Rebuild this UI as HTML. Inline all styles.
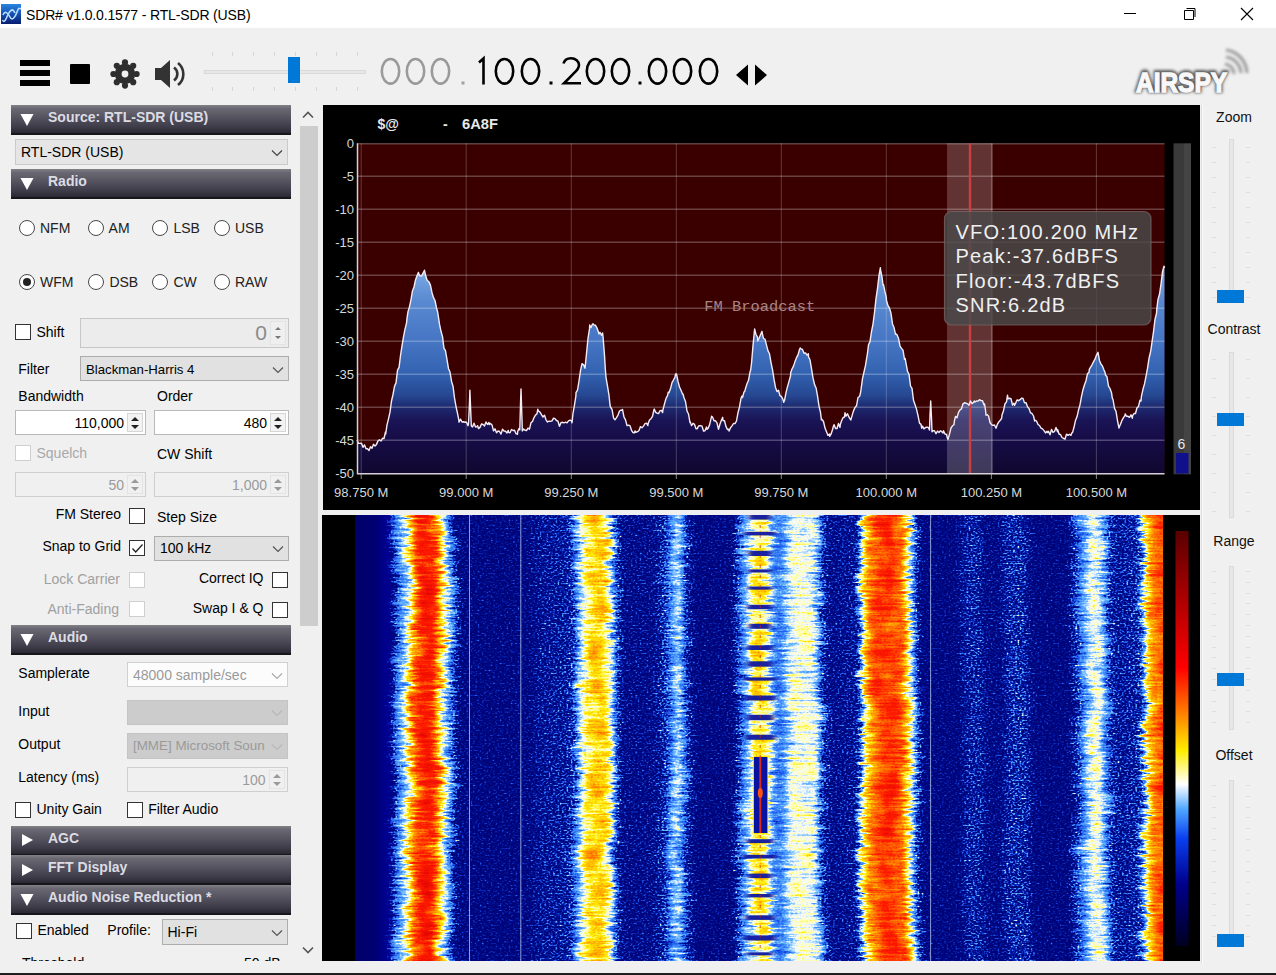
<!DOCTYPE html>
<html><head><meta charset="utf-8">
<style>
*{box-sizing:border-box;margin:0;padding:0}
html,body{width:1276px;height:975px;overflow:hidden;background:#f0f0f0;font-family:"Liberation Sans",sans-serif;color:#000}
.a{position:absolute}
#title{left:0;top:0;width:1276px;height:28px;background:#fff}
.t14{font-size:14px;line-height:16px;white-space:nowrap}
.hdr{position:absolute;left:11px;width:280px;height:30px;background:linear-gradient(#828286 0%,#6a6872 12%,#55535f 45%,#3e3c48 78%,#2a2832 100%);border-bottom:2px solid #17161c}
.hdr .tx{position:absolute;left:37px;top:4px;font-size:14px;line-height:17px;font-weight:bold;color:#dcdce4;white-space:nowrap}
.hdr .tri{position:absolute;left:9px;top:7.5px}
.cb{position:absolute;width:16px;height:16px;border:1px solid #333;background:#fff}
.cb.dis{border-color:#cfcfcf}
.rd{position:absolute;width:16px;height:16px;border:1.5px solid #484848;border-radius:50%;background:#fff}
.combo{position:absolute;background:#e1e1e1;border:1px solid #adadad}
.num{position:absolute;background:#fff;border:1px solid #b4b4b4}
.num.dis{background:#f0f0f0;border-color:#ccc}
.gray{color:#a0a0a0}
</style></head><body>
<div id="title" class="a">
<svg class="a" style="left:1px;top:4px" width="20" height="20" viewBox="0 0 20 20"><defs><linearGradient id="ig" x1="0" y1="0" x2="0" y2="1"><stop offset="0" stop-color="#2a86e0"/><stop offset="0.5" stop-color="#1450b0"/><stop offset="1" stop-color="#081c70"/></linearGradient></defs><rect width="20" height="20" fill="url(#ig)"/><g fill="none" stroke="#b8dcff" stroke-width="1.6"><path d="M1.5 16C4 21 6 11 8.5 8S12 5 14 9"/><path d="M2 11C4 6 7 9 9 13S14 14 16 8 19 5 20 5"/></g></svg>
<div class="a" style="left:26px;top:7px;font-size:14px;line-height:17px;letter-spacing:-0.15px;color:#000;white-space:nowrap">SDR# v1.0.0.1577 - RTL-SDR (USB)</div>
<svg class="a" style="left:1118px;top:0" width="158" height="28" viewBox="0 0 158 28"><path d="M6 13.5h12" stroke="#000" stroke-width="1"/><path d="M66.5 10.5h9v9h-9z M68.5 8.5h8.5v8.5" stroke="#000" stroke-width="1" fill="none"/><path d="M123 8l12 12M135 8l-12 12" stroke="#000" stroke-width="1.1"/></svg>
</div>
<div id="toolbar">
<div class="a" style="left:20px;top:60px;width:30px;height:6px;background:#000"></div>
<div class="a" style="left:20px;top:70px;width:30px;height:6px;background:#000"></div>
<div class="a" style="left:20px;top:80px;width:30px;height:6px;background:#000"></div>
<div class="a" style="left:70px;top:64px;width:20px;height:20px;background:#000;border-radius:1px"></div>
<svg class="a" style="left:108px;top:57px" width="34" height="34" viewBox="-17 -17 34 34"><g fill="#2e2e2e"><circle r="10.2"/><circle cx="0.00" cy="-11.60" r="3.1"/><circle cx="8.20" cy="-8.20" r="3.1"/><circle cx="11.60" cy="-0.00" r="3.1"/><circle cx="8.20" cy="8.20" r="3.1"/><circle cx="0.00" cy="11.60" r="3.1"/><circle cx="-8.20" cy="8.20" r="3.1"/><circle cx="-11.60" cy="0.00" r="3.1"/><circle cx="-8.20" cy="-8.20" r="3.1"/></g><circle r="3.4" fill="#f0f0f0"/></svg>
<svg class="a" style="left:153px;top:58px" width="34" height="32" viewBox="0 0 34 32"><path d="M2 10h6l9-8v28l-9-8H2z" fill="#333"/><path d="M21 9.5a8 8 0 0 1 0 13" stroke="#333" stroke-width="2.6" fill="none"/><path d="M25 5a14 14 0 0 1 0 22" stroke="#333" stroke-width="2.6" fill="none"/></svg>
<div class="a" style="left:204px;top:70px;width:162px;height:4px;background:#e7e7e7;border:1px solid #d9d9d9"></div>
<div class="a" style="left:212px;top:52px;width:1px;height:4px;background:#d6d6d6"></div><div class="a" style="left:212px;top:87px;width:1px;height:4px;background:#d6d6d6"></div><div class="a" style="left:232px;top:52px;width:1px;height:4px;background:#d6d6d6"></div><div class="a" style="left:232px;top:87px;width:1px;height:4px;background:#d6d6d6"></div><div class="a" style="left:253px;top:52px;width:1px;height:4px;background:#d6d6d6"></div><div class="a" style="left:253px;top:87px;width:1px;height:4px;background:#d6d6d6"></div><div class="a" style="left:274px;top:52px;width:1px;height:4px;background:#d6d6d6"></div><div class="a" style="left:274px;top:87px;width:1px;height:4px;background:#d6d6d6"></div><div class="a" style="left:295px;top:52px;width:1px;height:4px;background:#d6d6d6"></div><div class="a" style="left:295px;top:87px;width:1px;height:4px;background:#d6d6d6"></div><div class="a" style="left:316px;top:52px;width:1px;height:4px;background:#d6d6d6"></div><div class="a" style="left:316px;top:87px;width:1px;height:4px;background:#d6d6d6"></div><div class="a" style="left:336px;top:52px;width:1px;height:4px;background:#d6d6d6"></div><div class="a" style="left:336px;top:87px;width:1px;height:4px;background:#d6d6d6"></div><div class="a" style="left:357px;top:52px;width:1px;height:4px;background:#d6d6d6"></div><div class="a" style="left:357px;top:87px;width:1px;height:4px;background:#d6d6d6"></div>
<div class="a" style="left:288px;top:57px;width:12px;height:26px;background:#0078d7"></div>
<svg class="a" style="left:375px;top:50px" width="400" height="42" viewBox="375 50 400 42">
<g fill="none" stroke-width="2.6">
<g stroke="#9a9a9a"><ellipse cx="390.5" cy="71.3" rx="8.7" ry="12.3"/><ellipse cx="415.5" cy="71.3" rx="8.7" ry="12.3"/><ellipse cx="440.5" cy="71.3" rx="8.7" ry="12.3"/></g>
<g stroke="#000"><path d="M479 62.5l4.5-4v26"/><ellipse cx="504.5" cy="71.3" rx="8.7" ry="12.3"/><ellipse cx="530.5" cy="71.3" rx="8.7" ry="12.3"/>
<path d="M563.5 63.5c1-3.5 4-5.2 7.5-5.2c4.5 0 8 2.8 8 6.8c0 3.5-2 5.5-5.5 8.5l-9.5 9.7h17"/>
<ellipse cx="595.5" cy="71.3" rx="8.7" ry="12.3"/><ellipse cx="620.5" cy="71.3" rx="8.7" ry="12.3"/>
<ellipse cx="657.5" cy="71.3" rx="8.7" ry="12.3"/><ellipse cx="682.5" cy="71.3" rx="8.7" ry="12.3"/><ellipse cx="708.5" cy="71.3" rx="8.7" ry="12.3"/></g>
</g>
<rect x="461.5" y="81.5" width="3" height="3" fill="#a0a0a0"/><rect x="549.5" y="81.5" width="3" height="3" fill="#000"/><rect x="638.5" y="81.5" width="3" height="3" fill="#000"/>
<path d="M736 75l12-10.5v21z M767 75l-12-10.5v21z" fill="#000"/>
</svg>
<svg class="a" style="left:1125px;top:40px" width="140" height="62" viewBox="1125 40 140 62">
<defs><filter id="sh" x="1120" y="35" width="150" height="70" filterUnits="userSpaceOnUse"><feGaussianBlur stdDeviation="1.6"/></filter><filter id="sh2" x="1120" y="35" width="150" height="70" filterUnits="userSpaceOnUse"><feGaussianBlur stdDeviation="1.1"/></filter></defs>
<text x="1136" y="91" font-family="Liberation Sans" font-weight="bold" font-size="27" textLength="91" lengthAdjust="spacingAndGlyphs" fill="#555" stroke="#5a5a5a" stroke-width="4" filter="url(#sh)">AIRSPY</text>
<g fill="none" stroke="#9a9a9a" stroke-width="3" filter="url(#sh)"><path d="M1225 64a10 10 0 0 1 9 10"/><path d="M1226 57a17 17 0 0 1 15 16"/><path d="M1226 50a24 24 0 0 1 21 23"/></g>
<text x="1136" y="91.5" font-family="Liberation Sans" font-weight="bold" font-size="27" textLength="91" lengthAdjust="spacingAndGlyphs" fill="#f8f8f8" stroke="#f8f8f8" stroke-width="1.3">AIRSPY</text>
</svg>
</div>
<div id="left" class="a" style="left:0;top:100px;width:300px;height:861px;overflow:hidden"><div class="a" style="left:0;top:-100px;width:300px;height:1000px"><div class="hdr" style="top:105px"><svg class="tri" width="14" height="14" viewBox="0 0 14 14"><path d="M0.5 1h13L7 13z" fill="#fff"/></svg><div class="tx">Source: RTL-SDR (USB)</div></div>
<div class="a" style="left:15px;top:139px;width:273px;height:26px;background:#e5e5e5;border:1px solid #cacaca"><div class="a t14" style="left:5px;top:4.0px;color:#000">RTL-SDR (USB)</div><svg class="a" style="left:255px;top:9.0px" width="12" height="8" viewBox="0 0 12 8"><path d="M1 1.5l5 5 5-5" stroke="#444" stroke-width="1.2" fill="none"/></svg></div>
<div class="hdr" style="top:169px"><svg class="tri" width="14" height="14" viewBox="0 0 14 14"><path d="M0.5 1h13L7 13z" fill="#fff"/></svg><div class="tx">Radio</div></div>
<div class="rd" style="left:19.2px;top:220.3px"></div>
<div class="a t14 " style="left:40px;top:220.2px;color:#222">NFM</div>
<div class="rd" style="left:87.5px;top:220.3px"></div>
<div class="a t14 " style="left:108.6px;top:220.2px;color:#222">AM</div>
<div class="rd" style="left:151.7px;top:220.3px"></div>
<div class="a t14 " style="left:173.4px;top:220.2px;color:#222">LSB</div>
<div class="rd" style="left:213.8px;top:220.3px"></div>
<div class="a t14 " style="left:235px;top:220.2px;color:#222">USB</div>
<div class="rd" style="left:19.2px;top:274.4px"><div class="a" style="left:2.5px;top:2.5px;width:8px;height:8px;border-radius:50%;background:#222"></div></div>
<div class="a t14 " style="left:40px;top:274.3px;color:#222">WFM</div>
<div class="rd" style="left:87.5px;top:274.4px"></div>
<div class="a t14 " style="left:109.4px;top:274.3px;color:#222">DSB</div>
<div class="rd" style="left:151.7px;top:274.4px"></div>
<div class="a t14 " style="left:173.4px;top:274.3px;color:#222">CW</div>
<div class="rd" style="left:213.8px;top:274.4px"></div>
<div class="a t14 " style="left:235px;top:274.3px;color:#222">RAW</div>
<div class="cb" style="left:15px;top:324px"></div>
<div class="a t14 " style="left:36.5px;top:324px;">Shift</div>
<div class="a" style="left:80px;top:318px;width:209px;height:30px;background:#ececec;border:1px solid #c6c6c6"><div class="a" style="right:21px;top:3px;font-size:21px;line-height:22px;color:#8a8a8a">0</div><div class="a" style="right:2px;top:2px;width:16px;height:24px;background:#efefef;border:1px solid #e3e3e3"></div><svg class="a" style="right:4px;top:6px" width="12" height="16" viewBox="0 0 12 16"><path d="M3 5l3-3 3 3z M3 11l3 3 3-3z" fill="#777"/></svg></div>
<div class="a t14 " style="left:18.3px;top:360.8px;">Filter</div>
<div class="a" style="left:80px;top:356px;width:209px;height:25px;background:#e1e1e1;border:1px solid #adadad"><div class="a t14" style="left:5px;top:3.5px;color:#000"><span style="font-size:13.2px">Blackman-Harris 4</span></div><svg class="a" style="left:191px;top:8.5px" width="12" height="8" viewBox="0 0 12 8"><path d="M1 1.5l5 5 5-5" stroke="#555" stroke-width="1.2" fill="none"/></svg></div>
<div class="a t14 " style="left:18.3px;top:388px;">Bandwidth</div>
<div class="a t14 " style="left:157px;top:388px;">Order</div>
<div class="a" style="left:15px;top:410px;width:131px;height:25px;background:#fff;border:1px solid #b9b9b9"><div class="a t14" style="right:21px;top:3.5px;color:#000;text-align:right">110,000</div><div class="a" style="right:2px;top:2px;width:16px;height:19px;background:#f3f3f3;border:1px solid #d6d6d6"></div><svg class="a" style="right:4px;top:3.5px" width="12" height="16" viewBox="0 0 12 16"><path d="M2 6l4-4 4 4z M2 10l4 4 4-4z" fill="#222"/></svg></div>
<div class="a" style="left:154px;top:410px;width:135px;height:25px;background:#fff;border:1px solid #b9b9b9"><div class="a t14" style="right:21px;top:3.5px;color:#000;text-align:right">480</div><div class="a" style="right:2px;top:2px;width:16px;height:19px;background:#f3f3f3;border:1px solid #d6d6d6"></div><svg class="a" style="right:4px;top:3.5px" width="12" height="16" viewBox="0 0 12 16"><path d="M2 6l4-4 4 4z M2 10l4 4 4-4z" fill="#222"/></svg></div>
<div class="cb dis" style="left:15px;top:445px"></div>
<div class="a t14 " style="left:36.5px;top:445px;color:#a8a8a8">Squelch</div>
<div class="a t14 " style="left:157px;top:445.5px;">CW Shift</div>
<div class="a" style="left:15px;top:472px;width:131px;height:25px;background:#f0f0f0;border:1px solid #cfcfcf"><div class="a t14" style="right:21px;top:3.5px;color:#9a9a9a;text-align:right">50</div><div class="a" style="right:2px;top:2px;width:16px;height:19px;background:#f0f0f0;border:1px solid #e3e3e3"></div><svg class="a" style="right:4px;top:3.5px" width="12" height="16" viewBox="0 0 12 16"><path d="M2 6l4-4 4 4z M2 10l4 4 4-4z" fill="#9a9a9a"/></svg></div>
<div class="a" style="left:154px;top:472px;width:135px;height:25px;background:#f0f0f0;border:1px solid #cfcfcf"><div class="a t14" style="right:21px;top:3.5px;color:#9a9a9a;text-align:right">1,000</div><div class="a" style="right:2px;top:2px;width:16px;height:19px;background:#f0f0f0;border:1px solid #e3e3e3"></div><svg class="a" style="right:4px;top:3.5px" width="12" height="16" viewBox="0 0 12 16"><path d="M2 6l4-4 4 4z M2 10l4 4 4-4z" fill="#9a9a9a"/></svg></div>
<div class="a t14 " style="right:179.0px;top:506px;text-align:right">FM Stereo</div>
<div class="cb" style="left:129px;top:508px"></div>
<div class="a t14 " style="left:157px;top:508.6px;">Step Size</div>
<div class="a t14 " style="right:179.0px;top:537.6px;text-align:right">Snap to Grid</div>
<div class="cb" style="left:129px;top:539.5px"><svg class="a" style="left:1px;top:1px" width="13" height="13" viewBox="0 0 13 13"><path d="M1.5 6.5l3.2 3.5L11.5 2.5" stroke="#222" stroke-width="1.3" fill="none"/></svg></div>
<div class="a" style="left:154px;top:535.5px;width:135px;height:25.0px;background:#e1e1e1;border:1px solid #adadad"><div class="a t14" style="left:5px;top:3.5px;color:#000">100 kHz</div><svg class="a" style="left:117px;top:8.5px" width="12" height="8" viewBox="0 0 12 8"><path d="M1 1.5l5 5 5-5" stroke="#555" stroke-width="1.2" fill="none"/></svg></div>
<div class="a t14 gray" style="right:180.0px;top:570.5px;text-align:right">Lock Carrier</div>
<div class="cb dis" style="left:129px;top:571.5px"></div>
<div class="a t14 " style="right:36.5px;top:569.8px;text-align:right">Correct IQ</div>
<div class="cb" style="left:272px;top:571.5px"></div>
<div class="a t14 gray" style="right:181.0px;top:601px;text-align:right">Anti-Fading</div>
<div class="cb dis" style="left:129px;top:601px"></div>
<div class="a t14 " style="right:36.5px;top:600px;text-align:right">Swap I &amp; Q</div>
<div class="cb" style="left:272px;top:602px"></div>
<div class="hdr" style="top:625px"><svg class="tri" width="14" height="14" viewBox="0 0 14 14"><path d="M0.5 1h13L7 13z" fill="#fff"/></svg><div class="tx">Audio</div></div>
<div class="a t14 " style="left:18.3px;top:665px;">Samplerate</div>
<div class="a" style="left:127px;top:662px;width:160.5px;height:25px;background:#fcfcfc;border:1px solid #d0d0d0"><div class="a t14" style="left:5px;top:3.5px;color:#9a9a9a">48000 sample/sec</div><svg class="a" style="left:142.5px;top:8.5px" width="12" height="8" viewBox="0 0 12 8"><path d="M1 1.5l5 5 5-5" stroke="#aaa" stroke-width="1.2" fill="none"/></svg></div>
<div class="a t14 " style="left:18.3px;top:702.6px;">Input</div>
<div class="a" style="left:127px;top:699.5px;width:160.5px;height:25.5px;background:#cccccc;border:1px solid #c4c4c4"><div class="a t14" style="left:5px;top:3.75px;color:#000"></div><svg class="a" style="left:142.5px;top:8.75px" width="12" height="8" viewBox="0 0 12 8"><path d="M1 1.5l5 5 5-5" stroke="#b8b8b8" stroke-width="1.2" fill="none"/></svg></div>
<div class="a t14 " style="left:18.3px;top:735.5px;">Output</div>
<div class="a" style="left:127px;top:733px;width:160.5px;height:26px;background:#cccccc;border:1px solid #c4c4c4"><div class="a t14" style="width:132px;overflow:hidden;font-size:13.4px;left:5px;top:4.0px;color:#9a9a9a">[MME] Microsoft Soun</div><svg class="a" style="left:142.5px;top:9.0px" width="12" height="8" viewBox="0 0 12 8"><path d="M1 1.5l5 5 5-5" stroke="#b8b8b8" stroke-width="1.2" fill="none"/></svg></div>
<div class="a t14 " style="left:18.3px;top:769.3px;">Latency (ms)</div>
<div class="a" style="left:127px;top:767px;width:160.5px;height:25px;background:#f0f0f0;border:1px solid #cfcfcf"><div class="a t14" style="right:21px;top:3.5px;color:#9a9a9a;text-align:right">100</div><div class="a" style="right:2px;top:2px;width:16px;height:19px;background:#f0f0f0;border:1px solid #e3e3e3"></div><svg class="a" style="right:4px;top:3.5px" width="12" height="16" viewBox="0 0 12 16"><path d="M2 6l4-4 4 4z M2 10l4 4 4-4z" fill="#9a9a9a"/></svg></div>
<div class="cb" style="left:15px;top:801.5px"></div>
<div class="a t14 " style="left:36.5px;top:801px;">Unity Gain</div>
<div class="cb" style="left:127px;top:801.5px"></div>
<div class="a t14 " style="left:148.2px;top:801px;">Filter Audio</div>
<div class="hdr" style="top:825.5px"><svg class="tri" width="14" height="14" viewBox="0 0 14 14"><path d="M2 1l11 6L2 13z" fill="#fff"/></svg><div class="tx">AGC</div></div>
<div class="hdr" style="top:855px"><svg class="tri" width="14" height="14" viewBox="0 0 14 14"><path d="M2 1l11 6L2 13z" fill="#fff"/></svg><div class="tx">FFT Display</div></div>
<div class="hdr" style="top:885px"><svg class="tri" width="14" height="14" viewBox="0 0 14 14"><path d="M0.5 1h13L7 13z" fill="#fff"/></svg><div class="tx">Audio Noise Reduction *</div></div>
<div class="cb" style="left:15.5px;top:922.5px"></div>
<div class="a t14 " style="left:37.5px;top:922.4px;">Enabled</div>
<div class="a t14 " style="left:107.3px;top:922px;">Profile:</div>
<div class="a" style="left:161.5px;top:919px;width:126.5px;height:26px;background:#e1e1e1;border:1px solid #adadad"><div class="a t14" style="left:5px;top:4.0px;color:#000">Hi-Fi</div><svg class="a" style="left:108.5px;top:9.0px" width="12" height="8" viewBox="0 0 12 8"><path d="M1 1.5l5 5 5-5" stroke="#555" stroke-width="1.2" fill="none"/></svg></div>
<div class="a t14 " style="left:22px;top:955px;">Threshold</div><div class="a t14 " style="right:19.4px;top:955px;text-align:right">50 dB</div></div></div><div class="a" style="left:299px;top:106px;width:19px;height:855px;background:#f0f0f0"></div>
<svg class="a" style="left:302px;top:111px" width="12" height="8" viewBox="0 0 12 8"><path d="M1 6.5l5-5 5 5" stroke="#555" stroke-width="1.6" fill="none"/></svg>
<div class="a" style="left:300px;top:126px;width:18px;height:500px;background:#cdcdcd"></div>
<svg class="a" style="left:302px;top:946px" width="12" height="8" viewBox="0 0 12 8"><path d="M1 1.5l5 5 5-5" stroke="#555" stroke-width="1.6" fill="none"/></svg>
<svg class="a" style="left:323px;top:105px" width="877" height="405" viewBox="323 105 877 405">
<defs><linearGradient id="sg" gradientUnits="userSpaceOnUse" x1="0" y1="265" x2="0" y2="473"><stop offset="0" stop-color="#80b0e8"/><stop offset="0.168" stop-color="#5a8ad0"/><stop offset="0.36" stop-color="#4676c4"/><stop offset="0.52" stop-color="#3262b0"/><stop offset="0.625" stop-color="#264892"/><stop offset="0.683" stop-color="#1e2a70"/><stop offset="0.745" stop-color="#1a1456"/><stop offset="0.84" stop-color="#160c46"/><stop offset="1" stop-color="#100830"/></linearGradient></defs>
<rect x="323" y="105" width="877" height="405" fill="#000"/>
<rect x="357" y="143.3" width="807.5" height="330" fill="#3a0000"/>
<path d="M357.0 440.0 L358.5 443.4 L360.0 443.4 L361.5 443.3 L363.0 447.3 L364.5 444.9 L366.0 448.7 L367.5 448.7 L369.0 450.5 L370.5 446.7 L372.0 448.3 L373.5 444.3 L375.0 446.0 L376.5 444.4 L378.0 440.9 L379.5 439.8 L381.0 441.0 L382.5 438.3 L384.0 438.5 L385.5 432.0 L385.7 434.0 L387.0 424.9 L388.5 418.8 L390.0 412.2 L391.5 401.0 L393.0 394.5 L394.5 386.4 L396.0 382.9 L397.5 370.4 L398.6 368.0 L399.0 367.8 L400.5 355.5 L402.0 345.8 L403.5 336.8 L405.0 329.1 L406.5 323.2 L407.0 318.4 L408.0 311.6 L409.5 306.6 L411.0 299.6 L412.5 290.7 L412.8 290.0 L414.0 287.0 L415.5 279.9 L417.0 275.7 L418.5 272.4 L418.7 273.6 L420.0 275.8 L421.5 276.0 L423.0 273.2 L424.5 270.2 L424.6 271.2 L426.0 276.8 L427.0 280.0 L427.5 280.5 L429.0 281.9 L430.5 285.4 L432.0 292.7 L433.5 297.7 L435.0 300.5 L436.5 308.0 L437.5 311.3 L438.0 314.1 L439.5 324.2 L441.0 331.3 L442.5 336.6 L444.0 348.7 L444.6 349.0 L445.5 350.9 L447.0 359.7 L448.5 368.7 L450.0 372.0 L451.5 381.0 L451.7 382.0 L453.0 386.2 L454.5 397.9 L456.0 406.5 L457.5 413.3 L458.8 419.8 L459.0 422.1 L460.5 419.2 L462.0 422.0 L463.5 421.8 L465.0 422.2 L465.8 422.0 L466.5 422.3 L468.0 425.7 L468.5 424.0 L469.5 402.6 L469.9 390.3 L471.0 418.2 L471.3 426.0 L472.5 426.9 L474.0 423.2 L475.5 427.0 L477.0 426.6 L477.6 425.7 L478.5 428.6 L480.0 427.4 L481.5 424.0 L483.0 424.5 L484.5 426.0 L486.0 422.0 L487.5 424.5 L489.0 422.5 L489.4 424.5 L490.5 423.5 L492.0 424.9 L493.5 430.9 L495.0 428.8 L496.5 432.8 L498.0 431.0 L499.5 431.5 L501.0 434.1 L502.5 429.1 L504.0 431.0 L505.5 431.3 L507.0 433.0 L508.3 430.4 L508.5 432.3 L510.0 432.8 L511.5 429.5 L513.0 430.5 L514.5 430.3 L516.0 433.7 L517.5 434.3 L517.7 431.6 L519.0 428.5 L519.8 430.0 L520.5 404.1 L521.0 389.0 L522.0 419.7 L522.3 431.0 L523.5 429.1 L525.0 430.2 L526.5 430.5 L528.0 428.2 L529.5 429.2 L531.0 422.6 L532.5 421.5 L534.0 417.6 L535.5 415.1 L537.0 413.8 L537.8 409.2 L538.5 411.2 L540.0 412.1 L541.5 414.7 L543.0 417.0 L544.5 415.2 L546.0 419.8 L547.5 422.0 L549.0 421.1 L550.5 421.4 L552.0 420.8 L553.5 418.2 L555.0 418.6 L556.5 420.5 L558.0 421.2 L559.2 425.6 L559.5 426.3 L561.0 422.6 L562.5 422.3 L564.0 422.8 L565.5 422.2 L567.0 422.9 L568.5 420.9 L570.0 420.2 L571.5 420.8 L572.0 422.8 L573.0 413.5 L574.5 404.8 L575.9 396.0 L576.0 392.6 L577.5 390.2 L579.0 381.0 L580.5 370.7 L582.0 363.7 L582.3 363.7 L583.5 364.8 L585.0 368.3 L586.5 353.7 L588.0 338.4 L589.5 328.9 L589.7 325.0 L591.0 327.6 L592.5 324.0 L593.4 324.0 L594.0 325.0 L595.5 325.3 L597.0 328.0 L598.5 332.2 L599.0 334.0 L600.0 332.3 L601.5 335.3 L602.6 333.0 L603.0 336.3 L604.5 355.2 L605.4 370.0 L606.0 377.3 L607.5 386.1 L609.0 395.3 L610.0 405.0 L610.5 407.0 L612.0 409.3 L613.5 417.7 L613.7 418.2 L615.0 419.8 L616.5 417.6 L618.0 415.1 L619.5 411.0 L621.0 410.2 L622.0 410.0 L622.5 409.4 L624.0 417.2 L625.5 419.9 L627.0 425.6 L627.6 425.6 L628.5 425.2 L630.0 425.7 L631.5 430.3 L633.0 432.5 L634.5 432.8 L635.0 431.0 L636.0 432.3 L637.5 431.7 L639.0 430.5 L640.5 426.6 L642.0 427.7 L642.3 427.4 L643.5 426.1 L645.0 423.7 L646.5 423.2 L647.9 425.6 L648.0 424.0 L649.5 420.0 L651.0 418.7 L652.5 416.4 L654.0 409.5 L654.3 409.0 L655.5 412.1 L657.0 413.1 L658.5 413.6 L660.0 410.7 L661.5 410.4 L662.6 412.6 L663.0 409.5 L664.5 403.9 L666.0 398.5 L667.5 395.6 L668.2 392.3 L669.0 392.7 L670.5 388.6 L672.0 382.7 L673.5 380.0 L675.0 377.2 L675.6 373.9 L676.5 373.9 L678.0 381.4 L679.5 387.0 L681.0 390.3 L682.5 394.1 L683.0 394.0 L684.0 397.7 L685.5 401.6 L687.0 411.0 L688.5 414.0 L690.0 422.6 L690.3 421.9 L691.5 425.6 L693.0 423.3 L694.5 424.4 L696.0 428.8 L697.5 428.6 L697.7 427.4 L699.0 425.7 L700.5 425.7 L702.0 426.2 L703.5 431.0 L705.0 430.7 L706.5 427.1 L707.0 429.3 L708.0 428.4 L709.5 425.1 L711.0 418.9 L711.6 416.3 L712.5 417.0 L714.0 420.8 L715.5 420.8 L717.0 422.8 L718.0 427.4 L718.5 429.2 L720.0 424.0 L721.5 420.0 L722.7 417.3 L723.0 420.5 L724.5 420.8 L726.0 426.6 L727.5 429.6 L729.0 429.2 L729.1 431.1 L730.5 427.7 L732.0 425.9 L733.5 423.5 L735.0 423.6 L736.5 421.0 L738.0 412.7 L739.5 406.9 L741.0 398.3 L742.0 396.0 L742.5 397.6 L744.0 391.9 L744.7 391.6 L745.5 388.5 L747.0 383.8 L748.5 380.3 L750.0 372.0 L750.6 370.3 L751.5 363.5 L753.0 345.5 L754.5 330.2 L754.6 329.0 L756.0 334.5 L757.5 337.2 L757.7 340.8 L759.0 338.5 L760.5 334.7 L762.0 331.4 L762.4 333.8 L763.5 338.7 L765.0 339.2 L766.5 345.2 L768.0 350.9 L769.5 353.8 L771.0 362.6 L772.5 369.6 L774.0 379.2 L775.4 386.9 L775.5 387.4 L777.0 391.6 L778.5 390.3 L780.0 395.7 L781.5 396.6 L783.0 399.6 L783.7 402.2 L784.5 400.5 L786.0 392.6 L787.5 386.6 L789.0 381.4 L790.5 376.0 L790.7 372.7 L792.0 369.0 L793.5 366.1 L795.0 361.6 L796.5 357.7 L798.0 354.9 L799.5 349.5 L800.2 348.0 L801.0 348.8 L802.5 349.5 L804.0 353.3 L805.5 352.9 L807.0 355.1 L808.4 353.8 L808.5 356.9 L810.0 359.8 L811.5 368.6 L813.0 377.9 L814.5 384.3 L815.5 386.9 L816.0 387.5 L817.5 395.8 L819.0 406.1 L820.5 412.3 L821.4 419.9 L822.0 419.5 L823.5 421.5 L825.0 428.1 L826.5 431.7 L828.0 435.4 L829.5 433.9 L829.7 436.4 L831.0 434.2 L832.5 429.8 L833.2 427.0 L834.0 424.6 L835.5 428.5 L837.0 428.5 L838.5 423.5 L840.0 427.4 L840.3 424.6 L841.5 421.0 L843.0 417.7 L844.5 417.0 L845.0 412.8 L846.0 416.0 L847.5 413.8 L849.0 417.2 L850.5 419.5 L850.9 419.9 L852.0 415.9 L853.5 410.9 L855.0 407.5 L856.5 405.8 L858.0 397.5 L859.5 396.5 L860.3 394.0 L861.0 389.7 L862.5 378.7 L864.0 372.0 L865.5 365.3 L867.0 356.1 L867.4 353.8 L868.5 344.8 L870.0 341.6 L871.5 331.7 L873.0 324.1 L874.5 312.5 L876.0 298.7 L877.5 288.3 L879.0 275.6 L880.4 267.7 L880.5 270.0 L882.0 277.0 L883.0 285.0 L883.5 284.6 L885.0 291.9 L886.3 297.2 L886.5 300.4 L888.0 305.7 L889.5 308.2 L891.0 313.4 L892.5 323.9 L894.0 327.6 L895.5 334.2 L895.7 333.8 L897.0 334.7 L898.5 338.4 L900.0 346.1 L901.5 348.4 L903.0 350.2 L904.5 359.3 L905.2 358.5 L906.0 363.1 L907.5 371.3 L909.0 374.2 L910.5 386.0 L912.0 388.4 L913.5 400.3 L914.6 403.4 L915.0 404.5 L916.5 409.1 L918.0 415.6 L919.5 423.1 L921.0 424.4 L921.7 428.2 L922.5 426.2 L924.0 428.9 L925.5 427.5 L927.0 427.1 L928.5 427.7 L929.5 430.0 L930.0 415.2 L930.7 401.0 L931.5 418.1 L932.0 431.7 L933.0 430.7 L934.5 430.8 L936.0 433.7 L937.5 431.1 L939.0 432.5 L940.5 430.8 L942.0 432.0 L943.0 433.0 L943.5 430.7 L945.0 434.0 L946.5 434.5 L947.6 438.8 L948.0 439.2 L949.5 434.1 L951.0 428.0 L952.5 425.8 L954.0 424.7 L954.4 421.0 L955.5 416.4 L957.0 417.7 L958.5 412.4 L960.0 409.8 L961.5 408.8 L963.0 403.8 L964.5 402.8 L966.0 403.1 L967.5 403.8 L969.0 405.2 L970.5 401.0 L972.0 403.6 L973.5 402.5 L974.5 401.0 L975.0 402.0 L976.5 401.0 L978.0 401.1 L979.5 399.7 L981.0 400.6 L982.5 400.7 L984.0 405.1 L984.5 403.8 L985.5 410.0 L986.0 415.3 L987.0 414.6 L988.5 416.0 L990.0 422.5 L991.5 424.6 L993.0 425.4 L994.5 425.0 L996.0 428.2 L997.5 424.0 L999.0 421.7 L1000.5 420.1 L1001.7 418.2 L1002.0 415.0 L1003.5 410.7 L1005.0 403.7 L1006.5 401.9 L1007.5 395.2 L1008.0 398.7 L1009.5 398.3 L1011.0 398.6 L1012.5 405.1 L1014.0 403.3 L1014.6 405.3 L1015.5 403.5 L1017.0 399.9 L1018.5 400.7 L1020.0 399.7 L1021.5 398.4 L1021.8 398.1 L1023.0 398.4 L1024.5 402.9 L1026.0 402.6 L1027.5 406.8 L1029.0 408.4 L1030.5 412.9 L1032.0 413.5 L1033.5 416.0 L1034.7 421.0 L1035.0 420.1 L1036.5 421.0 L1038.0 424.5 L1039.5 425.5 L1041.0 428.1 L1042.5 428.9 L1044.0 430.6 L1045.5 432.9 L1047.0 431.3 L1047.7 432.6 L1048.5 431.3 L1050.0 434.8 L1051.5 429.4 L1053.0 432.4 L1054.5 431.5 L1056.0 427.5 L1057.5 431.8 L1057.7 429.7 L1059.0 434.0 L1060.5 434.6 L1062.0 437.5 L1063.5 438.3 L1065.0 439.2 L1066.5 434.1 L1068.0 435.4 L1069.5 434.3 L1071.0 435.3 L1072.0 432.6 L1072.5 432.6 L1074.0 427.3 L1075.5 420.4 L1077.0 416.8 L1078.5 410.1 L1080.0 404.7 L1080.7 401.0 L1081.5 396.4 L1083.0 389.7 L1084.5 384.8 L1086.0 380.7 L1087.5 373.6 L1089.0 372.5 L1089.3 369.4 L1090.5 367.4 L1092.0 364.8 L1093.5 361.9 L1095.0 359.2 L1096.5 355.1 L1097.3 353.6 L1098.0 352.3 L1099.5 360.7 L1101.0 364.1 L1102.5 366.2 L1104.0 370.1 L1105.0 372.3 L1105.5 375.0 L1107.0 376.8 L1108.5 386.1 L1110.0 388.5 L1111.5 392.7 L1112.3 398.1 L1113.0 399.5 L1114.5 408.4 L1116.0 411.3 L1117.5 420.6 L1119.0 428.0 L1119.4 426.8 L1120.5 424.3 L1122.0 420.3 L1123.5 417.6 L1125.0 415.4 L1125.2 413.9 L1126.5 416.3 L1128.0 416.3 L1129.5 417.3 L1131.0 414.8 L1132.4 418.2 L1132.5 415.9 L1134.0 413.5 L1135.5 413.5 L1137.0 407.8 L1138.5 406.4 L1140.0 400.1 L1141.0 401.0 L1141.5 395.8 L1143.0 389.3 L1144.5 383.9 L1146.0 376.3 L1147.5 368.4 L1149.0 358.4 L1150.5 352.0 L1151.0 349.3 L1152.0 342.2 L1153.5 331.8 L1155.0 319.3 L1156.5 313.5 L1156.8 309.1 L1158.0 299.4 L1159.5 294.3 L1161.0 284.2 L1162.5 271.8 L1164.0 266.1 L1164.5 268.0 L1164.5 473.3 L357 473.3 Z" fill="url(#sg)"/>
<rect x="947" y="143.3" width="46" height="330" fill="#ffffff" opacity="0.2"/>
<path d="M357 176.3H1164.5" stroke="#ffffff" stroke-opacity="0.25" stroke-width="1.4"/>
<path d="M357 209.3H1164.5" stroke="#ffffff" stroke-opacity="0.25" stroke-width="1.4"/>
<path d="M357 242.3H1164.5" stroke="#ffffff" stroke-opacity="0.25" stroke-width="1.4"/>
<path d="M357 275.3H1164.5" stroke="#ffffff" stroke-opacity="0.25" stroke-width="1.4"/>
<path d="M357 308.3H1164.5" stroke="#ffffff" stroke-opacity="0.25" stroke-width="1.4"/>
<path d="M357 341.3H1164.5" stroke="#ffffff" stroke-opacity="0.25" stroke-width="1.4"/>
<path d="M357 374.3H1164.5" stroke="#ffffff" stroke-opacity="0.25" stroke-width="1.4"/>
<path d="M357 407.3H1164.5" stroke="#ffffff" stroke-opacity="0.25" stroke-width="1.4"/>
<path d="M357 440.3H1164.5" stroke="#ffffff" stroke-opacity="0.25" stroke-width="1.4"/>
<path d="M357 143.8H1164.5" stroke="#ffffff" stroke-opacity="0.25" stroke-width="1.4"/>
<path d="M361.2 143.3V473.3" stroke="#ffffff" stroke-opacity="0.22" stroke-width="1"/>
<path d="M361.2 474V479" stroke="#888" stroke-width="1"/>
<path d="M466.2 143.3V473.3" stroke="#ffffff" stroke-opacity="0.22" stroke-width="1"/>
<path d="M466.2 474V479" stroke="#888" stroke-width="1"/>
<path d="M571.3 143.3V473.3" stroke="#ffffff" stroke-opacity="0.22" stroke-width="1"/>
<path d="M571.3 474V479" stroke="#888" stroke-width="1"/>
<path d="M676.3 143.3V473.3" stroke="#ffffff" stroke-opacity="0.22" stroke-width="1"/>
<path d="M676.3 474V479" stroke="#888" stroke-width="1"/>
<path d="M781.3 143.3V473.3" stroke="#ffffff" stroke-opacity="0.22" stroke-width="1"/>
<path d="M781.3 474V479" stroke="#888" stroke-width="1"/>
<path d="M886.3 143.3V473.3" stroke="#ffffff" stroke-opacity="0.22" stroke-width="1"/>
<path d="M886.3 474V479" stroke="#888" stroke-width="1"/>
<path d="M991.4 143.3V473.3" stroke="#ffffff" stroke-opacity="0.22" stroke-width="1"/>
<path d="M991.4 474V479" stroke="#888" stroke-width="1"/>
<path d="M1096.4 143.3V473.3" stroke="#ffffff" stroke-opacity="0.22" stroke-width="1"/>
<path d="M1096.4 474V479" stroke="#888" stroke-width="1"/>
<path d="M970 143.3V473.3" stroke="#c84040" stroke-width="2.4"/>
<path d="M357.0 440.0 L358.5 443.4 L360.0 443.4 L361.5 443.3 L363.0 447.3 L364.5 444.9 L366.0 448.7 L367.5 448.7 L369.0 450.5 L370.5 446.7 L372.0 448.3 L373.5 444.3 L375.0 446.0 L376.5 444.4 L378.0 440.9 L379.5 439.8 L381.0 441.0 L382.5 438.3 L384.0 438.5 L385.5 432.0 L385.7 434.0 L387.0 424.9 L388.5 418.8 L390.0 412.2 L391.5 401.0 L393.0 394.5 L394.5 386.4 L396.0 382.9 L397.5 370.4 L398.6 368.0 L399.0 367.8 L400.5 355.5 L402.0 345.8 L403.5 336.8 L405.0 329.1 L406.5 323.2 L407.0 318.4 L408.0 311.6 L409.5 306.6 L411.0 299.6 L412.5 290.7 L412.8 290.0 L414.0 287.0 L415.5 279.9 L417.0 275.7 L418.5 272.4 L418.7 273.6 L420.0 275.8 L421.5 276.0 L423.0 273.2 L424.5 270.2 L424.6 271.2 L426.0 276.8 L427.0 280.0 L427.5 280.5 L429.0 281.9 L430.5 285.4 L432.0 292.7 L433.5 297.7 L435.0 300.5 L436.5 308.0 L437.5 311.3 L438.0 314.1 L439.5 324.2 L441.0 331.3 L442.5 336.6 L444.0 348.7 L444.6 349.0 L445.5 350.9 L447.0 359.7 L448.5 368.7 L450.0 372.0 L451.5 381.0 L451.7 382.0 L453.0 386.2 L454.5 397.9 L456.0 406.5 L457.5 413.3 L458.8 419.8 L459.0 422.1 L460.5 419.2 L462.0 422.0 L463.5 421.8 L465.0 422.2 L465.8 422.0 L466.5 422.3 L468.0 425.7 L468.5 424.0 L469.5 402.6 L469.9 390.3 L471.0 418.2 L471.3 426.0 L472.5 426.9 L474.0 423.2 L475.5 427.0 L477.0 426.6 L477.6 425.7 L478.5 428.6 L480.0 427.4 L481.5 424.0 L483.0 424.5 L484.5 426.0 L486.0 422.0 L487.5 424.5 L489.0 422.5 L489.4 424.5 L490.5 423.5 L492.0 424.9 L493.5 430.9 L495.0 428.8 L496.5 432.8 L498.0 431.0 L499.5 431.5 L501.0 434.1 L502.5 429.1 L504.0 431.0 L505.5 431.3 L507.0 433.0 L508.3 430.4 L508.5 432.3 L510.0 432.8 L511.5 429.5 L513.0 430.5 L514.5 430.3 L516.0 433.7 L517.5 434.3 L517.7 431.6 L519.0 428.5 L519.8 430.0 L520.5 404.1 L521.0 389.0 L522.0 419.7 L522.3 431.0 L523.5 429.1 L525.0 430.2 L526.5 430.5 L528.0 428.2 L529.5 429.2 L531.0 422.6 L532.5 421.5 L534.0 417.6 L535.5 415.1 L537.0 413.8 L537.8 409.2 L538.5 411.2 L540.0 412.1 L541.5 414.7 L543.0 417.0 L544.5 415.2 L546.0 419.8 L547.5 422.0 L549.0 421.1 L550.5 421.4 L552.0 420.8 L553.5 418.2 L555.0 418.6 L556.5 420.5 L558.0 421.2 L559.2 425.6 L559.5 426.3 L561.0 422.6 L562.5 422.3 L564.0 422.8 L565.5 422.2 L567.0 422.9 L568.5 420.9 L570.0 420.2 L571.5 420.8 L572.0 422.8 L573.0 413.5 L574.5 404.8 L575.9 396.0 L576.0 392.6 L577.5 390.2 L579.0 381.0 L580.5 370.7 L582.0 363.7 L582.3 363.7 L583.5 364.8 L585.0 368.3 L586.5 353.7 L588.0 338.4 L589.5 328.9 L589.7 325.0 L591.0 327.6 L592.5 324.0 L593.4 324.0 L594.0 325.0 L595.5 325.3 L597.0 328.0 L598.5 332.2 L599.0 334.0 L600.0 332.3 L601.5 335.3 L602.6 333.0 L603.0 336.3 L604.5 355.2 L605.4 370.0 L606.0 377.3 L607.5 386.1 L609.0 395.3 L610.0 405.0 L610.5 407.0 L612.0 409.3 L613.5 417.7 L613.7 418.2 L615.0 419.8 L616.5 417.6 L618.0 415.1 L619.5 411.0 L621.0 410.2 L622.0 410.0 L622.5 409.4 L624.0 417.2 L625.5 419.9 L627.0 425.6 L627.6 425.6 L628.5 425.2 L630.0 425.7 L631.5 430.3 L633.0 432.5 L634.5 432.8 L635.0 431.0 L636.0 432.3 L637.5 431.7 L639.0 430.5 L640.5 426.6 L642.0 427.7 L642.3 427.4 L643.5 426.1 L645.0 423.7 L646.5 423.2 L647.9 425.6 L648.0 424.0 L649.5 420.0 L651.0 418.7 L652.5 416.4 L654.0 409.5 L654.3 409.0 L655.5 412.1 L657.0 413.1 L658.5 413.6 L660.0 410.7 L661.5 410.4 L662.6 412.6 L663.0 409.5 L664.5 403.9 L666.0 398.5 L667.5 395.6 L668.2 392.3 L669.0 392.7 L670.5 388.6 L672.0 382.7 L673.5 380.0 L675.0 377.2 L675.6 373.9 L676.5 373.9 L678.0 381.4 L679.5 387.0 L681.0 390.3 L682.5 394.1 L683.0 394.0 L684.0 397.7 L685.5 401.6 L687.0 411.0 L688.5 414.0 L690.0 422.6 L690.3 421.9 L691.5 425.6 L693.0 423.3 L694.5 424.4 L696.0 428.8 L697.5 428.6 L697.7 427.4 L699.0 425.7 L700.5 425.7 L702.0 426.2 L703.5 431.0 L705.0 430.7 L706.5 427.1 L707.0 429.3 L708.0 428.4 L709.5 425.1 L711.0 418.9 L711.6 416.3 L712.5 417.0 L714.0 420.8 L715.5 420.8 L717.0 422.8 L718.0 427.4 L718.5 429.2 L720.0 424.0 L721.5 420.0 L722.7 417.3 L723.0 420.5 L724.5 420.8 L726.0 426.6 L727.5 429.6 L729.0 429.2 L729.1 431.1 L730.5 427.7 L732.0 425.9 L733.5 423.5 L735.0 423.6 L736.5 421.0 L738.0 412.7 L739.5 406.9 L741.0 398.3 L742.0 396.0 L742.5 397.6 L744.0 391.9 L744.7 391.6 L745.5 388.5 L747.0 383.8 L748.5 380.3 L750.0 372.0 L750.6 370.3 L751.5 363.5 L753.0 345.5 L754.5 330.2 L754.6 329.0 L756.0 334.5 L757.5 337.2 L757.7 340.8 L759.0 338.5 L760.5 334.7 L762.0 331.4 L762.4 333.8 L763.5 338.7 L765.0 339.2 L766.5 345.2 L768.0 350.9 L769.5 353.8 L771.0 362.6 L772.5 369.6 L774.0 379.2 L775.4 386.9 L775.5 387.4 L777.0 391.6 L778.5 390.3 L780.0 395.7 L781.5 396.6 L783.0 399.6 L783.7 402.2 L784.5 400.5 L786.0 392.6 L787.5 386.6 L789.0 381.4 L790.5 376.0 L790.7 372.7 L792.0 369.0 L793.5 366.1 L795.0 361.6 L796.5 357.7 L798.0 354.9 L799.5 349.5 L800.2 348.0 L801.0 348.8 L802.5 349.5 L804.0 353.3 L805.5 352.9 L807.0 355.1 L808.4 353.8 L808.5 356.9 L810.0 359.8 L811.5 368.6 L813.0 377.9 L814.5 384.3 L815.5 386.9 L816.0 387.5 L817.5 395.8 L819.0 406.1 L820.5 412.3 L821.4 419.9 L822.0 419.5 L823.5 421.5 L825.0 428.1 L826.5 431.7 L828.0 435.4 L829.5 433.9 L829.7 436.4 L831.0 434.2 L832.5 429.8 L833.2 427.0 L834.0 424.6 L835.5 428.5 L837.0 428.5 L838.5 423.5 L840.0 427.4 L840.3 424.6 L841.5 421.0 L843.0 417.7 L844.5 417.0 L845.0 412.8 L846.0 416.0 L847.5 413.8 L849.0 417.2 L850.5 419.5 L850.9 419.9 L852.0 415.9 L853.5 410.9 L855.0 407.5 L856.5 405.8 L858.0 397.5 L859.5 396.5 L860.3 394.0 L861.0 389.7 L862.5 378.7 L864.0 372.0 L865.5 365.3 L867.0 356.1 L867.4 353.8 L868.5 344.8 L870.0 341.6 L871.5 331.7 L873.0 324.1 L874.5 312.5 L876.0 298.7 L877.5 288.3 L879.0 275.6 L880.4 267.7 L880.5 270.0 L882.0 277.0 L883.0 285.0 L883.5 284.6 L885.0 291.9 L886.3 297.2 L886.5 300.4 L888.0 305.7 L889.5 308.2 L891.0 313.4 L892.5 323.9 L894.0 327.6 L895.5 334.2 L895.7 333.8 L897.0 334.7 L898.5 338.4 L900.0 346.1 L901.5 348.4 L903.0 350.2 L904.5 359.3 L905.2 358.5 L906.0 363.1 L907.5 371.3 L909.0 374.2 L910.5 386.0 L912.0 388.4 L913.5 400.3 L914.6 403.4 L915.0 404.5 L916.5 409.1 L918.0 415.6 L919.5 423.1 L921.0 424.4 L921.7 428.2 L922.5 426.2 L924.0 428.9 L925.5 427.5 L927.0 427.1 L928.5 427.7 L929.5 430.0 L930.0 415.2 L930.7 401.0 L931.5 418.1 L932.0 431.7 L933.0 430.7 L934.5 430.8 L936.0 433.7 L937.5 431.1 L939.0 432.5 L940.5 430.8 L942.0 432.0 L943.0 433.0 L943.5 430.7 L945.0 434.0 L946.5 434.5 L947.6 438.8 L948.0 439.2 L949.5 434.1 L951.0 428.0 L952.5 425.8 L954.0 424.7 L954.4 421.0 L955.5 416.4 L957.0 417.7 L958.5 412.4 L960.0 409.8 L961.5 408.8 L963.0 403.8 L964.5 402.8 L966.0 403.1 L967.5 403.8 L969.0 405.2 L970.5 401.0 L972.0 403.6 L973.5 402.5 L974.5 401.0 L975.0 402.0 L976.5 401.0 L978.0 401.1 L979.5 399.7 L981.0 400.6 L982.5 400.7 L984.0 405.1 L984.5 403.8 L985.5 410.0 L986.0 415.3 L987.0 414.6 L988.5 416.0 L990.0 422.5 L991.5 424.6 L993.0 425.4 L994.5 425.0 L996.0 428.2 L997.5 424.0 L999.0 421.7 L1000.5 420.1 L1001.7 418.2 L1002.0 415.0 L1003.5 410.7 L1005.0 403.7 L1006.5 401.9 L1007.5 395.2 L1008.0 398.7 L1009.5 398.3 L1011.0 398.6 L1012.5 405.1 L1014.0 403.3 L1014.6 405.3 L1015.5 403.5 L1017.0 399.9 L1018.5 400.7 L1020.0 399.7 L1021.5 398.4 L1021.8 398.1 L1023.0 398.4 L1024.5 402.9 L1026.0 402.6 L1027.5 406.8 L1029.0 408.4 L1030.5 412.9 L1032.0 413.5 L1033.5 416.0 L1034.7 421.0 L1035.0 420.1 L1036.5 421.0 L1038.0 424.5 L1039.5 425.5 L1041.0 428.1 L1042.5 428.9 L1044.0 430.6 L1045.5 432.9 L1047.0 431.3 L1047.7 432.6 L1048.5 431.3 L1050.0 434.8 L1051.5 429.4 L1053.0 432.4 L1054.5 431.5 L1056.0 427.5 L1057.5 431.8 L1057.7 429.7 L1059.0 434.0 L1060.5 434.6 L1062.0 437.5 L1063.5 438.3 L1065.0 439.2 L1066.5 434.1 L1068.0 435.4 L1069.5 434.3 L1071.0 435.3 L1072.0 432.6 L1072.5 432.6 L1074.0 427.3 L1075.5 420.4 L1077.0 416.8 L1078.5 410.1 L1080.0 404.7 L1080.7 401.0 L1081.5 396.4 L1083.0 389.7 L1084.5 384.8 L1086.0 380.7 L1087.5 373.6 L1089.0 372.5 L1089.3 369.4 L1090.5 367.4 L1092.0 364.8 L1093.5 361.9 L1095.0 359.2 L1096.5 355.1 L1097.3 353.6 L1098.0 352.3 L1099.5 360.7 L1101.0 364.1 L1102.5 366.2 L1104.0 370.1 L1105.0 372.3 L1105.5 375.0 L1107.0 376.8 L1108.5 386.1 L1110.0 388.5 L1111.5 392.7 L1112.3 398.1 L1113.0 399.5 L1114.5 408.4 L1116.0 411.3 L1117.5 420.6 L1119.0 428.0 L1119.4 426.8 L1120.5 424.3 L1122.0 420.3 L1123.5 417.6 L1125.0 415.4 L1125.2 413.9 L1126.5 416.3 L1128.0 416.3 L1129.5 417.3 L1131.0 414.8 L1132.4 418.2 L1132.5 415.9 L1134.0 413.5 L1135.5 413.5 L1137.0 407.8 L1138.5 406.4 L1140.0 400.1 L1141.0 401.0 L1141.5 395.8 L1143.0 389.3 L1144.5 383.9 L1146.0 376.3 L1147.5 368.4 L1149.0 358.4 L1150.5 352.0 L1151.0 349.3 L1152.0 342.2 L1153.5 331.8 L1155.0 319.3 L1156.5 313.5 L1156.8 309.1 L1158.0 299.4 L1159.5 294.3 L1161.0 284.2 L1162.5 271.8 L1164.0 266.1 L1164.5 268.0" stroke="#f4ecf4" stroke-width="1.4" fill="none" stroke-linejoin="round"/>
<path d="M357.5 143.3V473.8H1164.5" stroke="#d8d0d8" stroke-width="1.5" fill="none"/>
<text x="354" y="147.9" text-anchor="end" font-size="13" fill="#d8d8d8" font-family="Liberation Sans">0</text>
<text x="354" y="180.9" text-anchor="end" font-size="13" fill="#d8d8d8" font-family="Liberation Sans">-5</text>
<text x="354" y="213.9" text-anchor="end" font-size="13" fill="#d8d8d8" font-family="Liberation Sans">-10</text>
<text x="354" y="246.9" text-anchor="end" font-size="13" fill="#d8d8d8" font-family="Liberation Sans">-15</text>
<text x="354" y="279.9" text-anchor="end" font-size="13" fill="#d8d8d8" font-family="Liberation Sans">-20</text>
<text x="354" y="312.9" text-anchor="end" font-size="13" fill="#d8d8d8" font-family="Liberation Sans">-25</text>
<text x="354" y="345.9" text-anchor="end" font-size="13" fill="#d8d8d8" font-family="Liberation Sans">-30</text>
<text x="354" y="378.9" text-anchor="end" font-size="13" fill="#d8d8d8" font-family="Liberation Sans">-35</text>
<text x="354" y="411.9" text-anchor="end" font-size="13" fill="#d8d8d8" font-family="Liberation Sans">-40</text>
<text x="354" y="444.9" text-anchor="end" font-size="13" fill="#d8d8d8" font-family="Liberation Sans">-45</text>
<text x="354" y="477.9" text-anchor="end" font-size="13" fill="#d8d8d8" font-family="Liberation Sans">-50</text>
<text x="361.2" y="497" text-anchor="middle" font-size="13" fill="#d8d8d8" font-family="Liberation Sans">98.750 M</text>
<text x="466.2" y="497" text-anchor="middle" font-size="13" fill="#d8d8d8" font-family="Liberation Sans">99.000 M</text>
<text x="571.3" y="497" text-anchor="middle" font-size="13" fill="#d8d8d8" font-family="Liberation Sans">99.250 M</text>
<text x="676.3" y="497" text-anchor="middle" font-size="13" fill="#d8d8d8" font-family="Liberation Sans">99.500 M</text>
<text x="781.3" y="497" text-anchor="middle" font-size="13" fill="#d8d8d8" font-family="Liberation Sans">99.750 M</text>
<text x="886.3" y="497" text-anchor="middle" font-size="13" fill="#d8d8d8" font-family="Liberation Sans">100.000 M</text>
<text x="991.4" y="497" text-anchor="middle" font-size="13" fill="#d8d8d8" font-family="Liberation Sans">100.250 M</text>
<text x="1096.4" y="497" text-anchor="middle" font-size="13" fill="#d8d8d8" font-family="Liberation Sans">100.500 M</text>
<text x="377.5" y="129.3" font-size="14" font-weight="bold" fill="#e8e8e8" font-family="Liberation Sans">$@</text>
<text x="443" y="129.3" font-size="14" font-weight="bold" fill="#e8e8e8" font-family="Liberation Sans">-</text>
<text x="462" y="129.3" font-size="14" font-weight="bold" fill="#e8e8e8" font-family="Liberation Sans" textLength="36" lengthAdjust="spacingAndGlyphs">6A8F</text>
<text x="704.3" y="310.5" font-size="15.4" fill="#a88484" font-family="Liberation Mono">FM Broadcast</text>
<rect x="1173.5" y="143.3" width="10.5" height="331" fill="#3a3a3a"/><rect x="1184" y="143.3" width="7" height="331" fill="#444"/>
<rect x="1176" y="453" width="12.5" height="20.5" fill="#10108c"/>
<text x="1181.3" y="449.3" text-anchor="middle" font-size="14" fill="#e8e8e8" font-family="Liberation Sans">6</text>
<rect x="944.5" y="211.5" width="206.5" height="113.5" rx="7" fill="#4a4a4a" fill-opacity="0.82" stroke="#7a6a6a" stroke-opacity="0.7" stroke-width="1.2"/>
<text x="955.5" y="238.8" font-size="20" fill="#f0f0f0" font-family="Liberation Sans" letter-spacing="1.2">VFO:100.200 MHz</text>
<text x="955.5" y="263.3" font-size="20" fill="#f0f0f0" font-family="Liberation Sans" letter-spacing="1.2">Peak:-37.6dBFS</text>
<text x="955.5" y="287.8" font-size="20" fill="#f0f0f0" font-family="Liberation Sans" letter-spacing="1.2">Floor:-43.7dBFS</text>
<text x="955.5" y="312.3" font-size="20" fill="#f0f0f0" font-family="Liberation Sans" letter-spacing="1.2">SNR:6.2dB</text>
</svg>
<div id="wfall"><!--WF--><svg class="a" style="left:322px;top:515px" width="878" height="446" viewBox="322 515 878 446">
<defs>
<linearGradient id="wg" gradientUnits="userSpaceOnUse" x1="355" y1="0" x2="1163" y2="0"><stop offset="0.0000" stop-color="rgb(31,31,31)"/><stop offset="0.0210" stop-color="rgb(32,32,32)"/><stop offset="0.0359" stop-color="rgb(38,38,38)"/><stop offset="0.0433" stop-color="rgb(48,48,48)"/><stop offset="0.0507" stop-color="rgb(69,69,69)"/><stop offset="0.0594" stop-color="rgb(87,87,87)"/><stop offset="0.0656" stop-color="rgb(105,105,105)"/><stop offset="0.0705" stop-color="rgb(128,128,128)"/><stop offset="0.0755" stop-color="rgb(153,153,153)"/><stop offset="0.0829" stop-color="rgb(171,171,171)"/><stop offset="0.0903" stop-color="rgb(176,176,176)"/><stop offset="0.0965" stop-color="rgb(168,168,168)"/><stop offset="0.1015" stop-color="rgb(148,148,148)"/><stop offset="0.1064" stop-color="rgb(122,122,122)"/><stop offset="0.1114" stop-color="rgb(102,102,102)"/><stop offset="0.1163" stop-color="rgb(84,84,84)"/><stop offset="0.1225" stop-color="rgb(64,64,64)"/><stop offset="0.1287" stop-color="rgb(48,48,48)"/><stop offset="0.1795" stop-color="rgb(47,47,47)"/><stop offset="0.2141" stop-color="rgb(48,48,48)"/><stop offset="0.2351" stop-color="rgb(54,54,54)"/><stop offset="0.2599" stop-color="rgb(55,55,55)"/><stop offset="0.2686" stop-color="rgb(60,60,60)"/><stop offset="0.2748" stop-color="rgb(79,79,79)"/><stop offset="0.2809" stop-color="rgb(97,97,97)"/><stop offset="0.2871" stop-color="rgb(115,115,115)"/><stop offset="0.2970" stop-color="rgb(125,125,125)"/><stop offset="0.3069" stop-color="rgb(125,125,125)"/><stop offset="0.3131" stop-color="rgb(112,112,112)"/><stop offset="0.3181" stop-color="rgb(94,94,94)"/><stop offset="0.3230" stop-color="rgb(71,71,71)"/><stop offset="0.3304" stop-color="rgb(50,50,50)"/><stop offset="0.3651" stop-color="rgb(50,50,50)"/><stop offset="0.3762" stop-color="rgb(54,54,54)"/><stop offset="0.3861" stop-color="rgb(65,65,65)"/><stop offset="0.3936" stop-color="rgb(84,84,84)"/><stop offset="0.3998" stop-color="rgb(92,92,92)"/><stop offset="0.4059" stop-color="rgb(76,76,76)"/><stop offset="0.4134" stop-color="rgb(56,56,56)"/><stop offset="0.4233" stop-color="rgb(47,47,47)"/><stop offset="0.4678" stop-color="rgb(48,48,48)"/><stop offset="0.4715" stop-color="rgb(59,59,59)"/><stop offset="0.4790" stop-color="rgb(76,76,76)"/><stop offset="0.4876" stop-color="rgb(92,92,92)"/><stop offset="0.4926" stop-color="rgb(112,112,112)"/><stop offset="0.5012" stop-color="rgb(120,120,120)"/><stop offset="0.5099" stop-color="rgb(112,112,112)"/><stop offset="0.5149" stop-color="rgb(89,89,89)"/><stop offset="0.5223" stop-color="rgb(74,74,74)"/><stop offset="0.5297" stop-color="rgb(79,79,79)"/><stop offset="0.5359" stop-color="rgb(92,92,92)"/><stop offset="0.5421" stop-color="rgb(101,101,101)"/><stop offset="0.5557" stop-color="rgb(103,103,103)"/><stop offset="0.5668" stop-color="rgb(101,101,101)"/><stop offset="0.5730" stop-color="rgb(84,84,84)"/><stop offset="0.5792" stop-color="rgb(61,61,61)"/><stop offset="0.5903" stop-color="rgb(50,50,50)"/><stop offset="0.6200" stop-color="rgb(54,54,54)"/><stop offset="0.6250" stop-color="rgb(82,82,82)"/><stop offset="0.6300" stop-color="rgb(115,115,115)"/><stop offset="0.6374" stop-color="rgb(143,143,143)"/><stop offset="0.6498" stop-color="rgb(161,161,161)"/><stop offset="0.6646" stop-color="rgb(163,163,163)"/><stop offset="0.6770" stop-color="rgb(150,150,150)"/><stop offset="0.6832" stop-color="rgb(122,122,122)"/><stop offset="0.6881" stop-color="rgb(97,97,97)"/><stop offset="0.6943" stop-color="rgb(69,69,69)"/><stop offset="0.7017" stop-color="rgb(47,47,47)"/><stop offset="0.7463" stop-color="rgb(47,47,47)"/><stop offset="0.7525" stop-color="rgb(52,52,52)"/><stop offset="0.7587" stop-color="rgb(57,57,57)"/><stop offset="0.7735" stop-color="rgb(57,57,57)"/><stop offset="0.7797" stop-color="rgb(50,50,50)"/><stop offset="0.7983" stop-color="rgb(48,48,48)"/><stop offset="0.8045" stop-color="rgb(55,55,55)"/><stop offset="0.8106" stop-color="rgb(59,59,59)"/><stop offset="0.8304" stop-color="rgb(59,59,59)"/><stop offset="0.8354" stop-color="rgb(51,51,51)"/><stop offset="0.8428" stop-color="rgb(47,47,47)"/><stop offset="0.8824" stop-color="rgb(47,47,47)"/><stop offset="0.8911" stop-color="rgb(60,60,60)"/><stop offset="0.8998" stop-color="rgb(74,74,74)"/><stop offset="0.9084" stop-color="rgb(92,92,92)"/><stop offset="0.9158" stop-color="rgb(105,105,105)"/><stop offset="0.9220" stop-color="rgb(97,97,97)"/><stop offset="0.9295" stop-color="rgb(79,79,79)"/><stop offset="0.9369" stop-color="rgb(60,60,60)"/><stop offset="0.9468" stop-color="rgb(54,54,54)"/><stop offset="0.9691" stop-color="rgb(59,59,59)"/><stop offset="0.9752" stop-color="rgb(79,79,79)"/><stop offset="0.9802" stop-color="rgb(115,115,115)"/><stop offset="0.9876" stop-color="rgb(140,140,140)"/><stop offset="1.0000" stop-color="rgb(156,156,156)"/></linearGradient>
<linearGradient id="cbar" x1="0" y1="0" x2="0" y2="1"><stop offset="0" stop-color="#5a0000"/><stop offset="0.33" stop-color="#ff0000"/><stop offset="0.45" stop-color="#ff8c00"/><stop offset="0.53" stop-color="#ffee00"/><stop offset="0.61" stop-color="#ffffff"/><stop offset="0.67" stop-color="#50a8ff"/><stop offset="0.74" stop-color="#0a40f0"/><stop offset="0.85" stop-color="#00008c"/><stop offset="1" stop-color="#000020"/></linearGradient>
<filter id="wf" filterUnits="userSpaceOnUse" x="325" y="500" width="870" height="480" color-interpolation-filters="sRGB">
<feTurbulence type="fractalNoise" baseFrequency="0.0015 0.025" numOctaves="2" seed="3" result="n0"/>
<feColorMatrix in="n0" type="matrix" values="1 0 0 0 0 1 0 0 0 0 1 0 0 0 0 0 0 0 0 1" result="r0"/>
<feDisplacementMap in="SourceGraphic" in2="r0" scale="12" xChannelSelector="R" yChannelSelector="A" result="d0"/>
<feTurbulence type="fractalNoise" baseFrequency="0.06 0.4" numOctaves="2" seed="17" result="nd"/>
<feColorMatrix in="nd" type="matrix" values="1 0 0 0 0 1 0 0 0 0 1 0 0 0 0 0 0 0 0 1" result="rd"/>
<feDisplacementMap in="d0" in2="rd" scale="18.0" xChannelSelector="R" yChannelSelector="A" result="d1"/>
<feTurbulence type="fractalNoise" baseFrequency="0.02 0.35" numOctaves="2" seed="11" result="n1"/>
<feColorMatrix in="n1" type="matrix" values="1 0 0 0 0 1 0 0 0 0 1 0 0 0 0 0 0 0 0 1" result="r1"/>
<feComponentTransfer in="d1" result="J"><feFuncR type="table" tableValues="0.000 0.000 0.000 0.000 0.000 0.000 0.000 0.000 0.000 0.000 0.000 0.000 0.000 0.000 0.000 0.000 0.000 0.000 0.010 0.020 0.030 0.040 0.050 0.060 0.070 0.080 0.090 0.100 0.110 0.120 0.130 0.140 0.150 0.160 0.170 0.180 0.180 0.180 0.180 0.180 0.180 0.180 0.180 0.180 0.180 0.180 0.180 0.180 0.180 0.180 0.180 0.180 0.180 0.180 0.180 0.180 0.180 0.180 0.180 0.180 0.180 0.180 0.180 0.180 0.180 0.180 0.180 0.180 0.180 0.180 0.180 0.180 0.180 0.180 0.180 0.180 0.180 0.180 0.180 0.180 0.180 0.180 0.180 0.180 0.180 0.180 0.180 0.180 0.180 0.180 0.180 0.180 0.180 0.180 0.180 0.180 0.180 0.180 0.180 0.180 0.180"/><feFuncG type="table" tableValues="0.000 0.000 0.000 0.000 0.000 0.000 0.000 0.000 0.000 0.000 0.000 0.000 0.000 0.000 0.000 0.000 0.000 0.000 0.010 0.020 0.030 0.040 0.050 0.060 0.070 0.080 0.090 0.100 0.110 0.120 0.130 0.140 0.150 0.160 0.170 0.180 0.180 0.180 0.180 0.180 0.180 0.180 0.180 0.180 0.180 0.180 0.180 0.180 0.180 0.180 0.180 0.180 0.180 0.180 0.180 0.180 0.180 0.180 0.180 0.180 0.180 0.180 0.180 0.180 0.180 0.180 0.180 0.180 0.180 0.180 0.180 0.180 0.180 0.180 0.180 0.180 0.180 0.180 0.180 0.180 0.180 0.180 0.180 0.180 0.180 0.180 0.180 0.180 0.180 0.180 0.180 0.180 0.180 0.180 0.180 0.180 0.180 0.180 0.180 0.180 0.180"/><feFuncB type="table" tableValues="0.000 0.000 0.000 0.000 0.000 0.000 0.000 0.000 0.000 0.000 0.000 0.000 0.000 0.000 0.000 0.000 0.000 0.000 0.010 0.020 0.030 0.040 0.050 0.060 0.070 0.080 0.090 0.100 0.110 0.120 0.130 0.140 0.150 0.160 0.170 0.180 0.180 0.180 0.180 0.180 0.180 0.180 0.180 0.180 0.180 0.180 0.180 0.180 0.180 0.180 0.180 0.180 0.180 0.180 0.180 0.180 0.180 0.180 0.180 0.180 0.180 0.180 0.180 0.180 0.180 0.180 0.180 0.180 0.180 0.180 0.180 0.180 0.180 0.180 0.180 0.180 0.180 0.180 0.180 0.180 0.180 0.180 0.180 0.180 0.180 0.180 0.180 0.180 0.180 0.180 0.180 0.180 0.180 0.180 0.180 0.180 0.180 0.180 0.180 0.180 0.180"/><feFuncA type="linear" slope="0" intercept="1"/></feComponentTransfer>
<feComponentTransfer in="J" result="Ji"><feFuncR type="linear" slope="-1" intercept="1"/><feFuncG type="linear" slope="-1" intercept="1"/><feFuncB type="linear" slope="-1" intercept="1"/><feFuncA type="linear" slope="0" intercept="1"/></feComponentTransfer>
<feComposite in="J" in2="r1" operator="arithmetic" k1="1.0" k2="0" k3="0" k4="0.0" result="M"/>
<feComposite in="d1" in2="M" operator="arithmetic" k1="0" k2="1" k3="1" k4="-0.0" result="s1"/>
<feComposite in="s1" in2="Ji" operator="arithmetic" k1="0" k2="1" k3="0.5" k4="-0.5" result="s2"/>
<feTurbulence type="fractalNoise" baseFrequency="0.06 0.05" numOctaves="2" seed="23" result="nb"/>
<feColorMatrix in="nb" type="matrix" values="1 0 0 0 0 1 0 0 0 0 1 0 0 0 0 0 0 0 0 1" result="rb"/>
<feComponentTransfer in="d1" result="J2"><feFuncR type="table" tableValues="0.000 0.000 0.000 0.000 0.000 0.000 0.000 0.000 0.000 0.000 0.000 0.000 0.000 0.000 0.000 0.000 0.000 0.000 0.000 0.000 0.000 0.000 0.000 0.010 0.020 0.030 0.040 0.050 0.060 0.070 0.080 0.090 0.100 0.110 0.120 0.130 0.140 0.150 0.160 0.170 0.180 0.190 0.200 0.210 0.220 0.230 0.240 0.250 0.260 0.270 0.280 0.290 0.300 0.300 0.300 0.300 0.300 0.300 0.300 0.300 0.300 0.300 0.300 0.300 0.300 0.300 0.300 0.300 0.300 0.300 0.300 0.300 0.300 0.300 0.300 0.300 0.300 0.300 0.300 0.300 0.300 0.300 0.300 0.300 0.300 0.300 0.300 0.300 0.300 0.300 0.300 0.300 0.300 0.300 0.300 0.300 0.300 0.300 0.300 0.300 0.300"/><feFuncG type="table" tableValues="0.000 0.000 0.000 0.000 0.000 0.000 0.000 0.000 0.000 0.000 0.000 0.000 0.000 0.000 0.000 0.000 0.000 0.000 0.000 0.000 0.000 0.000 0.000 0.010 0.020 0.030 0.040 0.050 0.060 0.070 0.080 0.090 0.100 0.110 0.120 0.130 0.140 0.150 0.160 0.170 0.180 0.190 0.200 0.210 0.220 0.230 0.240 0.250 0.260 0.270 0.280 0.290 0.300 0.300 0.300 0.300 0.300 0.300 0.300 0.300 0.300 0.300 0.300 0.300 0.300 0.300 0.300 0.300 0.300 0.300 0.300 0.300 0.300 0.300 0.300 0.300 0.300 0.300 0.300 0.300 0.300 0.300 0.300 0.300 0.300 0.300 0.300 0.300 0.300 0.300 0.300 0.300 0.300 0.300 0.300 0.300 0.300 0.300 0.300 0.300 0.300"/><feFuncB type="table" tableValues="0.000 0.000 0.000 0.000 0.000 0.000 0.000 0.000 0.000 0.000 0.000 0.000 0.000 0.000 0.000 0.000 0.000 0.000 0.000 0.000 0.000 0.000 0.000 0.010 0.020 0.030 0.040 0.050 0.060 0.070 0.080 0.090 0.100 0.110 0.120 0.130 0.140 0.150 0.160 0.170 0.180 0.190 0.200 0.210 0.220 0.230 0.240 0.250 0.260 0.270 0.280 0.290 0.300 0.300 0.300 0.300 0.300 0.300 0.300 0.300 0.300 0.300 0.300 0.300 0.300 0.300 0.300 0.300 0.300 0.300 0.300 0.300 0.300 0.300 0.300 0.300 0.300 0.300 0.300 0.300 0.300 0.300 0.300 0.300 0.300 0.300 0.300 0.300 0.300 0.300 0.300 0.300 0.300 0.300 0.300 0.300 0.300 0.300 0.300 0.300 0.300"/><feFuncA type="linear" slope="0" intercept="1"/></feComponentTransfer>
<feComponentTransfer in="J2" result="J2i"><feFuncR type="linear" slope="-1" intercept="1"/><feFuncG type="linear" slope="-1" intercept="1"/><feFuncB type="linear" slope="-1" intercept="1"/><feFuncA type="linear" slope="0" intercept="1"/></feComponentTransfer>
<feComposite in="J2" in2="rb" operator="arithmetic" k1="0.6" k2="0" k3="0" k4="0.4" result="M2"/>
<feComposite in="s2" in2="M2" operator="arithmetic" k1="0" k2="1" k3="1" k4="-0.4" result="s2a"/>
<feComposite in="s2a" in2="J2i" operator="arithmetic" k1="0" k2="1" k3="0.3" k4="-0.3" result="s2b"/>
<feTurbulence type="fractalNoise" baseFrequency="0.45 0.6" numOctaves="1" seed="5" result="n2"/>
<feColorMatrix in="n2" type="matrix" values="1 0 0 0 0 1 0 0 0 0 1 0 0 0 0 0 0 0 0 1" result="r2a"/>
<feComponentTransfer in="r2a" result="r2"><feFuncR type="gamma" amplitude="1" exponent="2.5" offset="0"/><feFuncG type="gamma" amplitude="1" exponent="2.5" offset="0"/><feFuncB type="gamma" amplitude="1" exponent="2.5" offset="0"/></feComponentTransfer>
<feComposite in="s2b" in2="r2" operator="arithmetic" k1="0" k2="1" k3="0.12" k4="-0.024" result="s3a"/>
<feComponentTransfer in="d1" result="K"><feFuncR type="table" tableValues="0.000 0.000 0.000 0.000 0.000 0.000 0.000 0.000 0.000 0.000 0.000 0.000 0.000 0.000 0.000 0.000 0.000 0.125 0.250 0.375 0.500 0.625 0.750 0.875 1.000 0.889 0.667 0.444 0.222 0.000 0.000 0.000 0.000 0.000 0.000 0.000 0.000 0.000 0.000 0.000 0.000 0.000 0.000 0.000 0.000 0.000 0.000 0.000 0.000 0.000 0.000 0.000 0.000 0.000 0.000 0.000 0.000 0.000 0.000 0.000 0.000 0.000 0.000 0.000 0.000 0.000 0.000 0.000 0.000 0.000 0.000 0.000 0.000 0.000 0.000 0.000 0.000 0.000 0.000 0.000 0.000 0.000 0.000 0.000 0.000 0.000 0.000 0.000 0.000 0.000 0.000 0.000 0.000 0.000 0.000 0.000 0.000 0.000 0.000 0.000 0.000"/><feFuncG type="table" tableValues="0.000 0.000 0.000 0.000 0.000 0.000 0.000 0.000 0.000 0.000 0.000 0.000 0.000 0.000 0.000 0.000 0.000 0.125 0.250 0.375 0.500 0.625 0.750 0.875 1.000 0.889 0.667 0.444 0.222 0.000 0.000 0.000 0.000 0.000 0.000 0.000 0.000 0.000 0.000 0.000 0.000 0.000 0.000 0.000 0.000 0.000 0.000 0.000 0.000 0.000 0.000 0.000 0.000 0.000 0.000 0.000 0.000 0.000 0.000 0.000 0.000 0.000 0.000 0.000 0.000 0.000 0.000 0.000 0.000 0.000 0.000 0.000 0.000 0.000 0.000 0.000 0.000 0.000 0.000 0.000 0.000 0.000 0.000 0.000 0.000 0.000 0.000 0.000 0.000 0.000 0.000 0.000 0.000 0.000 0.000 0.000 0.000 0.000 0.000 0.000 0.000"/><feFuncB type="table" tableValues="0.000 0.000 0.000 0.000 0.000 0.000 0.000 0.000 0.000 0.000 0.000 0.000 0.000 0.000 0.000 0.000 0.000 0.125 0.250 0.375 0.500 0.625 0.750 0.875 1.000 0.889 0.667 0.444 0.222 0.000 0.000 0.000 0.000 0.000 0.000 0.000 0.000 0.000 0.000 0.000 0.000 0.000 0.000 0.000 0.000 0.000 0.000 0.000 0.000 0.000 0.000 0.000 0.000 0.000 0.000 0.000 0.000 0.000 0.000 0.000 0.000 0.000 0.000 0.000 0.000 0.000 0.000 0.000 0.000 0.000 0.000 0.000 0.000 0.000 0.000 0.000 0.000 0.000 0.000 0.000 0.000 0.000 0.000 0.000 0.000 0.000 0.000 0.000 0.000 0.000 0.000 0.000 0.000 0.000 0.000 0.000 0.000 0.000 0.000 0.000 0.000"/><feFuncA type="linear" slope="0" intercept="1"/></feComponentTransfer>
<feComponentTransfer in="K" result="Ki"><feFuncR type="linear" slope="-1" intercept="1"/><feFuncG type="linear" slope="-1" intercept="1"/><feFuncB type="linear" slope="-1" intercept="1"/><feFuncA type="linear" slope="0" intercept="1"/></feComponentTransfer>
<feComposite in="K" in2="r2" operator="arithmetic" k1="0.4" k2="0" k3="0" k4="0.6" result="MS"/>
<feComposite in="s3a" in2="MS" operator="arithmetic" k1="0" k2="1" k3="1" k4="-0.6" result="s3b"/>
<feComposite in="s3b" in2="Ki" operator="arithmetic" k1="0" k2="1" k3="0.08000000000000002" k4="-0.08000000000000002" result="s3"/>
<feComponentTransfer in="s3"><feFuncR type="table" tableValues="0.000 0.000 0.000 0.000 0.000 0.000 0.000 0.000 0.000 0.000 0.000 0.000 0.000 0.000 0.000 0.000 0.000 0.000 0.000 0.000 0.000 0.000 0.000 0.000 0.000 0.000 0.000 0.000 0.000 0.000 0.000 0.000 0.000 0.000 0.000 0.000 0.000 0.000 0.000 0.000 0.000 0.006 0.011 0.017 0.022 0.028 0.034 0.039 0.052 0.064 0.076 0.089 0.101 0.113 0.125 0.146 0.167 0.188 0.209 0.230 0.251 0.272 0.293 0.314 0.335 0.356 0.376 0.427 0.478 0.529 0.580 0.631 0.682 0.733 0.784 0.843 0.902 0.961 0.965 0.969 0.974 0.978 0.983 0.987 0.991 0.996 1.000 1.000 1.000 1.000 1.000 1.000 1.000 1.000 1.000 1.000 1.000 1.000 1.000 1.000 1.000 1.000 1.000 1.000 1.000 1.000 1.000 1.000 1.000 1.000 1.000 1.000 1.000 1.000 1.000 1.000 1.000 1.000 1.000 1.000 1.000 1.000 1.000 1.000 1.000 1.000 1.000 1.000 1.000 1.000 1.000 1.000 1.000 0.995 0.991 0.986 0.982 0.977 0.972 0.968 0.963 0.958 0.954 0.949 0.945 0.940 0.935 0.931 0.926 0.921 0.917 0.912 0.908 0.903 0.898 0.894 0.889 0.884 0.880 0.875 0.871 0.860 0.849 0.838 0.827 0.816 0.805 0.794 0.783 0.772 0.761 0.750 0.739 0.728 0.717 0.706 0.695 0.684 0.673 0.662 0.651 0.640 0.629 0.618 0.607 0.596 0.585 0.574 0.563 0.552 0.541 0.530 0.519 0.508 0.497 0.486 0.475 0.464 0.453 0.442 0.431"/><feFuncG type="table" tableValues="0.000 0.000 0.000 0.000 0.000 0.000 0.000 0.000 0.000 0.000 0.000 0.000 0.000 0.000 0.000 0.000 0.000 0.000 0.000 0.000 0.000 0.000 0.000 0.000 0.000 0.002 0.003 0.005 0.006 0.008 0.009 0.011 0.013 0.014 0.016 0.022 0.029 0.035 0.042 0.048 0.055 0.068 0.082 0.095 0.109 0.122 0.136 0.149 0.182 0.214 0.246 0.279 0.311 0.344 0.376 0.403 0.429 0.455 0.481 0.507 0.533 0.559 0.586 0.612 0.638 0.664 0.690 0.717 0.743 0.770 0.796 0.823 0.849 0.875 0.902 0.928 0.954 0.980 0.983 0.985 0.987 0.989 0.991 0.993 0.996 0.998 1.000 0.991 0.981 0.972 0.963 0.953 0.944 0.935 0.925 0.903 0.880 0.858 0.835 0.813 0.790 0.768 0.745 0.723 0.700 0.677 0.655 0.632 0.610 0.587 0.565 0.544 0.523 0.503 0.482 0.461 0.441 0.420 0.399 0.379 0.358 0.337 0.317 0.296 0.275 0.255 0.234 0.213 0.193 0.172 0.151 0.130 0.110 0.106 0.102 0.098 0.094 0.090 0.086 0.082 0.078 0.075 0.071 0.067 0.063 0.059 0.055 0.051 0.047 0.043 0.039 0.035 0.031 0.027 0.024 0.020 0.016 0.012 0.008 0.004 0.000 0.000 0.000 0.000 0.000 0.000 0.000 0.000 0.000 0.000 0.000 0.000 0.000 0.000 0.000 0.000 0.000 0.000 0.000 0.000 0.000 0.000 0.000 0.000 0.000 0.000 0.000 0.000 0.000 0.000 0.000 0.000 0.000 0.000 0.000 0.000 0.000 0.000 0.000 0.000 0.000"/><feFuncB type="table" tableValues="0.000 0.018 0.036 0.054 0.072 0.090 0.108 0.125 0.143 0.161 0.179 0.197 0.215 0.233 0.251 0.273 0.295 0.317 0.339 0.361 0.383 0.405 0.427 0.449 0.471 0.471 0.471 0.471 0.471 0.471 0.471 0.471 0.471 0.471 0.471 0.484 0.497 0.510 0.523 0.536 0.549 0.574 0.598 0.623 0.648 0.672 0.697 0.722 0.753 0.784 0.816 0.847 0.878 0.910 0.941 0.946 0.951 0.956 0.961 0.966 0.971 0.975 0.980 0.985 0.990 0.995 1.000 1.000 1.000 1.000 1.000 1.000 1.000 1.000 1.000 1.000 1.000 1.000 0.963 0.926 0.889 0.852 0.815 0.778 0.741 0.704 0.667 0.583 0.500 0.417 0.333 0.250 0.167 0.083 0.000 0.000 0.000 0.000 0.000 0.000 0.000 0.000 0.000 0.000 0.000 0.000 0.000 0.000 0.000 0.000 0.000 0.000 0.000 0.000 0.000 0.000 0.000 0.000 0.000 0.000 0.000 0.000 0.000 0.000 0.000 0.000 0.000 0.000 0.000 0.000 0.000 0.000 0.000 0.000 0.000 0.000 0.000 0.000 0.000 0.000 0.000 0.000 0.000 0.000 0.000 0.000 0.000 0.000 0.000 0.000 0.000 0.000 0.000 0.000 0.000 0.000 0.000 0.000 0.000 0.000 0.000 0.000 0.000 0.000 0.000 0.000 0.000 0.000 0.000 0.000 0.000 0.000 0.000 0.000 0.000 0.000 0.000 0.000 0.000 0.000 0.000 0.000 0.000 0.000 0.000 0.000 0.000 0.000 0.000 0.000 0.000 0.000 0.000 0.000 0.000 0.000 0.000 0.000 0.000 0.000 0.000"/><feFuncA type="linear" slope="0" intercept="1"/></feComponentTransfer>
</filter>
</defs>
<rect x="322" y="515" width="878" height="446" fill="#000"/>
<clipPath id="wclip"><rect x="355" y="515" width="808" height="446"/></clipPath><filter id="bl" x="-20%" y="-50%" width="140%" height="200%"><feGaussianBlur stdDeviation="2.5 0.6"/></filter><g clip-path="url(#wclip)"><rect x="325" y="500" width="870" height="480" fill="url(#wg)" filter="url(#wf)"/><g filter="url(#bl)"><rect x="748.8" y="515.0" width="22.4" height="4.6" fill="#0818a4" opacity="0.95"/><rect x="743.8" y="531.8" width="32.3" height="3.6" fill="#0818a4" opacity="0.95"/><rect x="748.4" y="550.8" width="23.2" height="5.2" fill="#0818a4" opacity="0.95"/><rect x="747.5" y="569.4" width="25.1" height="3.1" fill="#0818a4" opacity="0.95"/><rect x="747.6" y="586.5" width="24.8" height="3.1" fill="#0818a4" opacity="0.95"/><rect x="747.5" y="604.8" width="25.1" height="4.4" fill="#0818a4" opacity="0.95"/><rect x="749.0" y="623.8" width="22.1" height="5.0" fill="#0818a4" opacity="0.95"/><rect x="746.6" y="645.3" width="26.8" height="4.7" fill="#0818a4" opacity="0.95"/><rect x="746.6" y="661.3" width="26.7" height="5.4" fill="#0818a4" opacity="0.95"/><rect x="743.1" y="677.4" width="33.9" height="3.2" fill="#0818a4" opacity="0.95"/><rect x="743.9" y="695.5" width="32.2" height="5.0" fill="#0818a4" opacity="0.95"/><rect x="746.4" y="714.8" width="27.3" height="5.4" fill="#0818a4" opacity="0.95"/><rect x="744.7" y="734.7" width="30.7" height="5.1" fill="#0818a4" opacity="0.95"/><rect x="746.4" y="839.2" width="27.2" height="3.9" fill="#0818a4" opacity="0.95"/><rect x="742.4" y="854.8" width="35.1" height="3.7" fill="#0818a4" opacity="0.95"/><rect x="747.8" y="873.6" width="24.4" height="4.5" fill="#0818a4" opacity="0.95"/><rect x="746.3" y="894.0" width="27.3" height="3.4" fill="#0818a4" opacity="0.95"/><rect x="745.1" y="915.3" width="29.8" height="4.6" fill="#0818a4" opacity="0.95"/><rect x="743.6" y="935.4" width="32.9" height="5.1" fill="#0818a4" opacity="0.95"/><rect x="746.8" y="952.3" width="26.4" height="3.1" fill="#0818a4" opacity="0.95"/></g><rect x="753" y="757" width="15" height="76" fill="#0814a0"/><path d="M753.5 757V833M767.8 757V833" stroke="#e8f0ff" stroke-width="1" opacity="0.8"/><path d="M760.3 525V955" stroke="#c82010" stroke-width="1.5" stroke-dasharray="3 7" opacity="0.5"/><path d="M760.3 757V833" stroke="#e02818" stroke-width="2"/><ellipse cx="760.3" cy="793" rx="2.5" ry="5" fill="#ff5010"/></g>
<linearGradient id="nv" gradientUnits="userSpaceOnUse" x1="355" y1="0" x2="394" y2="0"><stop offset="0" stop-color="#00006a"/><stop offset="0.55" stop-color="#000074"/><stop offset="0.8" stop-color="#000094" stop-opacity="0.8"/><stop offset="1" stop-color="#0000b0" stop-opacity="0"/></linearGradient><rect x="355" y="515" width="39" height="446" fill="url(#nv)"/>
<path d="M469.5 515V961M520.8 515V961M930.6 515V961" stroke="#c8dcff" stroke-opacity="0.7" stroke-width="1"/>
<rect x="1175.5" y="531" width="13" height="415" fill="url(#cbar)"/>
</svg><!--/WF--></div>
<div class="a" style="left:1201px;top:105px;width:1px;height:858px;background:#dcdcdc"></div><div class="a" style="left:1202px;top:105px;width:1px;height:858px;background:#fafafa"></div>
<div class="a t14" style="left:1203px;width:62px;top:109px;text-align:center;color:#111">Zoom</div><div class="a" style="left:1229px;top:139px;width:5px;height:164px;background:#e7e7e7;border:1px solid #dadada"></div><div class="a" style="left:1212px;top:147px;width:4px;height:1px;background:#dedede"></div><div class="a" style="left:1246px;top:147px;width:4px;height:1px;background:#dedede"></div><div class="a" style="left:1212px;top:162px;width:4px;height:1px;background:#dedede"></div><div class="a" style="left:1246px;top:162px;width:4px;height:1px;background:#dedede"></div><div class="a" style="left:1212px;top:177px;width:4px;height:1px;background:#dedede"></div><div class="a" style="left:1246px;top:177px;width:4px;height:1px;background:#dedede"></div><div class="a" style="left:1212px;top:192px;width:4px;height:1px;background:#dedede"></div><div class="a" style="left:1246px;top:192px;width:4px;height:1px;background:#dedede"></div><div class="a" style="left:1212px;top:207px;width:4px;height:1px;background:#dedede"></div><div class="a" style="left:1246px;top:207px;width:4px;height:1px;background:#dedede"></div><div class="a" style="left:1212px;top:222px;width:4px;height:1px;background:#dedede"></div><div class="a" style="left:1246px;top:222px;width:4px;height:1px;background:#dedede"></div><div class="a" style="left:1212px;top:237px;width:4px;height:1px;background:#dedede"></div><div class="a" style="left:1246px;top:237px;width:4px;height:1px;background:#dedede"></div><div class="a" style="left:1212px;top:252px;width:4px;height:1px;background:#dedede"></div><div class="a" style="left:1246px;top:252px;width:4px;height:1px;background:#dedede"></div><div class="a" style="left:1212px;top:267px;width:4px;height:1px;background:#dedede"></div><div class="a" style="left:1246px;top:267px;width:4px;height:1px;background:#dedede"></div><div class="a" style="left:1212px;top:282px;width:4px;height:1px;background:#dedede"></div><div class="a" style="left:1246px;top:282px;width:4px;height:1px;background:#dedede"></div><div class="a" style="left:1212px;top:297px;width:4px;height:1px;background:#dedede"></div><div class="a" style="left:1246px;top:297px;width:4px;height:1px;background:#dedede"></div><div class="a" style="left:1217px;top:290px;width:27px;height:13px;background:#0078d7"></div>
<div class="a t14" style="left:1203px;width:62px;top:321px;text-align:center;color:#111">Contrast</div><div class="a" style="left:1229px;top:352px;width:5px;height:166px;background:#e7e7e7;border:1px solid #dadada"></div><div class="a" style="left:1212px;top:359px;width:4px;height:1px;background:#dedede"></div><div class="a" style="left:1246px;top:359px;width:4px;height:1px;background:#dedede"></div><div class="a" style="left:1212px;top:378px;width:4px;height:1px;background:#dedede"></div><div class="a" style="left:1246px;top:378px;width:4px;height:1px;background:#dedede"></div><div class="a" style="left:1212px;top:397px;width:4px;height:1px;background:#dedede"></div><div class="a" style="left:1246px;top:397px;width:4px;height:1px;background:#dedede"></div><div class="a" style="left:1212px;top:416px;width:4px;height:1px;background:#dedede"></div><div class="a" style="left:1246px;top:416px;width:4px;height:1px;background:#dedede"></div><div class="a" style="left:1212px;top:435px;width:4px;height:1px;background:#dedede"></div><div class="a" style="left:1246px;top:435px;width:4px;height:1px;background:#dedede"></div><div class="a" style="left:1212px;top:454px;width:4px;height:1px;background:#dedede"></div><div class="a" style="left:1246px;top:454px;width:4px;height:1px;background:#dedede"></div><div class="a" style="left:1212px;top:473px;width:4px;height:1px;background:#dedede"></div><div class="a" style="left:1246px;top:473px;width:4px;height:1px;background:#dedede"></div><div class="a" style="left:1212px;top:492px;width:4px;height:1px;background:#dedede"></div><div class="a" style="left:1246px;top:492px;width:4px;height:1px;background:#dedede"></div><div class="a" style="left:1212px;top:511px;width:4px;height:1px;background:#dedede"></div><div class="a" style="left:1246px;top:511px;width:4px;height:1px;background:#dedede"></div><div class="a" style="left:1217px;top:412.5px;width:27px;height:13px;background:#0078d7"></div>
<div class="a t14" style="left:1203px;width:62px;top:533.3px;text-align:center;color:#111">Range</div><div class="a" style="left:1229px;top:566px;width:5px;height:164px;background:#e7e7e7;border:1px solid #dadada"></div><div class="a" style="left:1212px;top:571px;width:4px;height:1px;background:#dedede"></div><div class="a" style="left:1246px;top:571px;width:4px;height:1px;background:#dedede"></div><div class="a" style="left:1212px;top:582px;width:4px;height:1px;background:#dedede"></div><div class="a" style="left:1246px;top:582px;width:4px;height:1px;background:#dedede"></div><div class="a" style="left:1212px;top:593px;width:4px;height:1px;background:#dedede"></div><div class="a" style="left:1246px;top:593px;width:4px;height:1px;background:#dedede"></div><div class="a" style="left:1212px;top:603px;width:4px;height:1px;background:#dedede"></div><div class="a" style="left:1246px;top:603px;width:4px;height:1px;background:#dedede"></div><div class="a" style="left:1212px;top:614px;width:4px;height:1px;background:#dedede"></div><div class="a" style="left:1246px;top:614px;width:4px;height:1px;background:#dedede"></div><div class="a" style="left:1212px;top:625px;width:4px;height:1px;background:#dedede"></div><div class="a" style="left:1246px;top:625px;width:4px;height:1px;background:#dedede"></div><div class="a" style="left:1212px;top:636px;width:4px;height:1px;background:#dedede"></div><div class="a" style="left:1246px;top:636px;width:4px;height:1px;background:#dedede"></div><div class="a" style="left:1212px;top:647px;width:4px;height:1px;background:#dedede"></div><div class="a" style="left:1246px;top:647px;width:4px;height:1px;background:#dedede"></div><div class="a" style="left:1212px;top:657px;width:4px;height:1px;background:#dedede"></div><div class="a" style="left:1246px;top:657px;width:4px;height:1px;background:#dedede"></div><div class="a" style="left:1212px;top:668px;width:4px;height:1px;background:#dedede"></div><div class="a" style="left:1246px;top:668px;width:4px;height:1px;background:#dedede"></div><div class="a" style="left:1212px;top:679px;width:4px;height:1px;background:#dedede"></div><div class="a" style="left:1246px;top:679px;width:4px;height:1px;background:#dedede"></div><div class="a" style="left:1212px;top:690px;width:4px;height:1px;background:#dedede"></div><div class="a" style="left:1246px;top:690px;width:4px;height:1px;background:#dedede"></div><div class="a" style="left:1212px;top:701px;width:4px;height:1px;background:#dedede"></div><div class="a" style="left:1246px;top:701px;width:4px;height:1px;background:#dedede"></div><div class="a" style="left:1212px;top:711px;width:4px;height:1px;background:#dedede"></div><div class="a" style="left:1246px;top:711px;width:4px;height:1px;background:#dedede"></div><div class="a" style="left:1212px;top:722px;width:4px;height:1px;background:#dedede"></div><div class="a" style="left:1246px;top:722px;width:4px;height:1px;background:#dedede"></div><div class="a" style="left:1217px;top:672.5px;width:27px;height:13px;background:#0078d7"></div>
<div class="a t14" style="left:1203px;width:62px;top:746.6px;text-align:center;color:#111">Offset</div><div class="a" style="left:1229px;top:780px;width:5px;height:166px;background:#e7e7e7;border:1px solid #dadada"></div><div class="a" style="left:1212px;top:785px;width:4px;height:1px;background:#dedede"></div><div class="a" style="left:1246px;top:785px;width:4px;height:1px;background:#dedede"></div><div class="a" style="left:1212px;top:796px;width:4px;height:1px;background:#dedede"></div><div class="a" style="left:1246px;top:796px;width:4px;height:1px;background:#dedede"></div><div class="a" style="left:1212px;top:807px;width:4px;height:1px;background:#dedede"></div><div class="a" style="left:1246px;top:807px;width:4px;height:1px;background:#dedede"></div><div class="a" style="left:1212px;top:817px;width:4px;height:1px;background:#dedede"></div><div class="a" style="left:1246px;top:817px;width:4px;height:1px;background:#dedede"></div><div class="a" style="left:1212px;top:828px;width:4px;height:1px;background:#dedede"></div><div class="a" style="left:1246px;top:828px;width:4px;height:1px;background:#dedede"></div><div class="a" style="left:1212px;top:839px;width:4px;height:1px;background:#dedede"></div><div class="a" style="left:1246px;top:839px;width:4px;height:1px;background:#dedede"></div><div class="a" style="left:1212px;top:850px;width:4px;height:1px;background:#dedede"></div><div class="a" style="left:1246px;top:850px;width:4px;height:1px;background:#dedede"></div><div class="a" style="left:1212px;top:861px;width:4px;height:1px;background:#dedede"></div><div class="a" style="left:1246px;top:861px;width:4px;height:1px;background:#dedede"></div><div class="a" style="left:1212px;top:871px;width:4px;height:1px;background:#dedede"></div><div class="a" style="left:1246px;top:871px;width:4px;height:1px;background:#dedede"></div><div class="a" style="left:1212px;top:882px;width:4px;height:1px;background:#dedede"></div><div class="a" style="left:1246px;top:882px;width:4px;height:1px;background:#dedede"></div><div class="a" style="left:1212px;top:893px;width:4px;height:1px;background:#dedede"></div><div class="a" style="left:1246px;top:893px;width:4px;height:1px;background:#dedede"></div><div class="a" style="left:1212px;top:904px;width:4px;height:1px;background:#dedede"></div><div class="a" style="left:1246px;top:904px;width:4px;height:1px;background:#dedede"></div><div class="a" style="left:1212px;top:915px;width:4px;height:1px;background:#dedede"></div><div class="a" style="left:1246px;top:915px;width:4px;height:1px;background:#dedede"></div><div class="a" style="left:1212px;top:925px;width:4px;height:1px;background:#dedede"></div><div class="a" style="left:1246px;top:925px;width:4px;height:1px;background:#dedede"></div><div class="a" style="left:1212px;top:936px;width:4px;height:1px;background:#dedede"></div><div class="a" style="left:1246px;top:936px;width:4px;height:1px;background:#dedede"></div><div class="a" style="left:1217px;top:933.5px;width:27px;height:13px;background:#0078d7"></div>
<div class="a" style="left:0;top:973px;width:1276px;height:2px;background:#1e1e1e"></div>
</body></html>
